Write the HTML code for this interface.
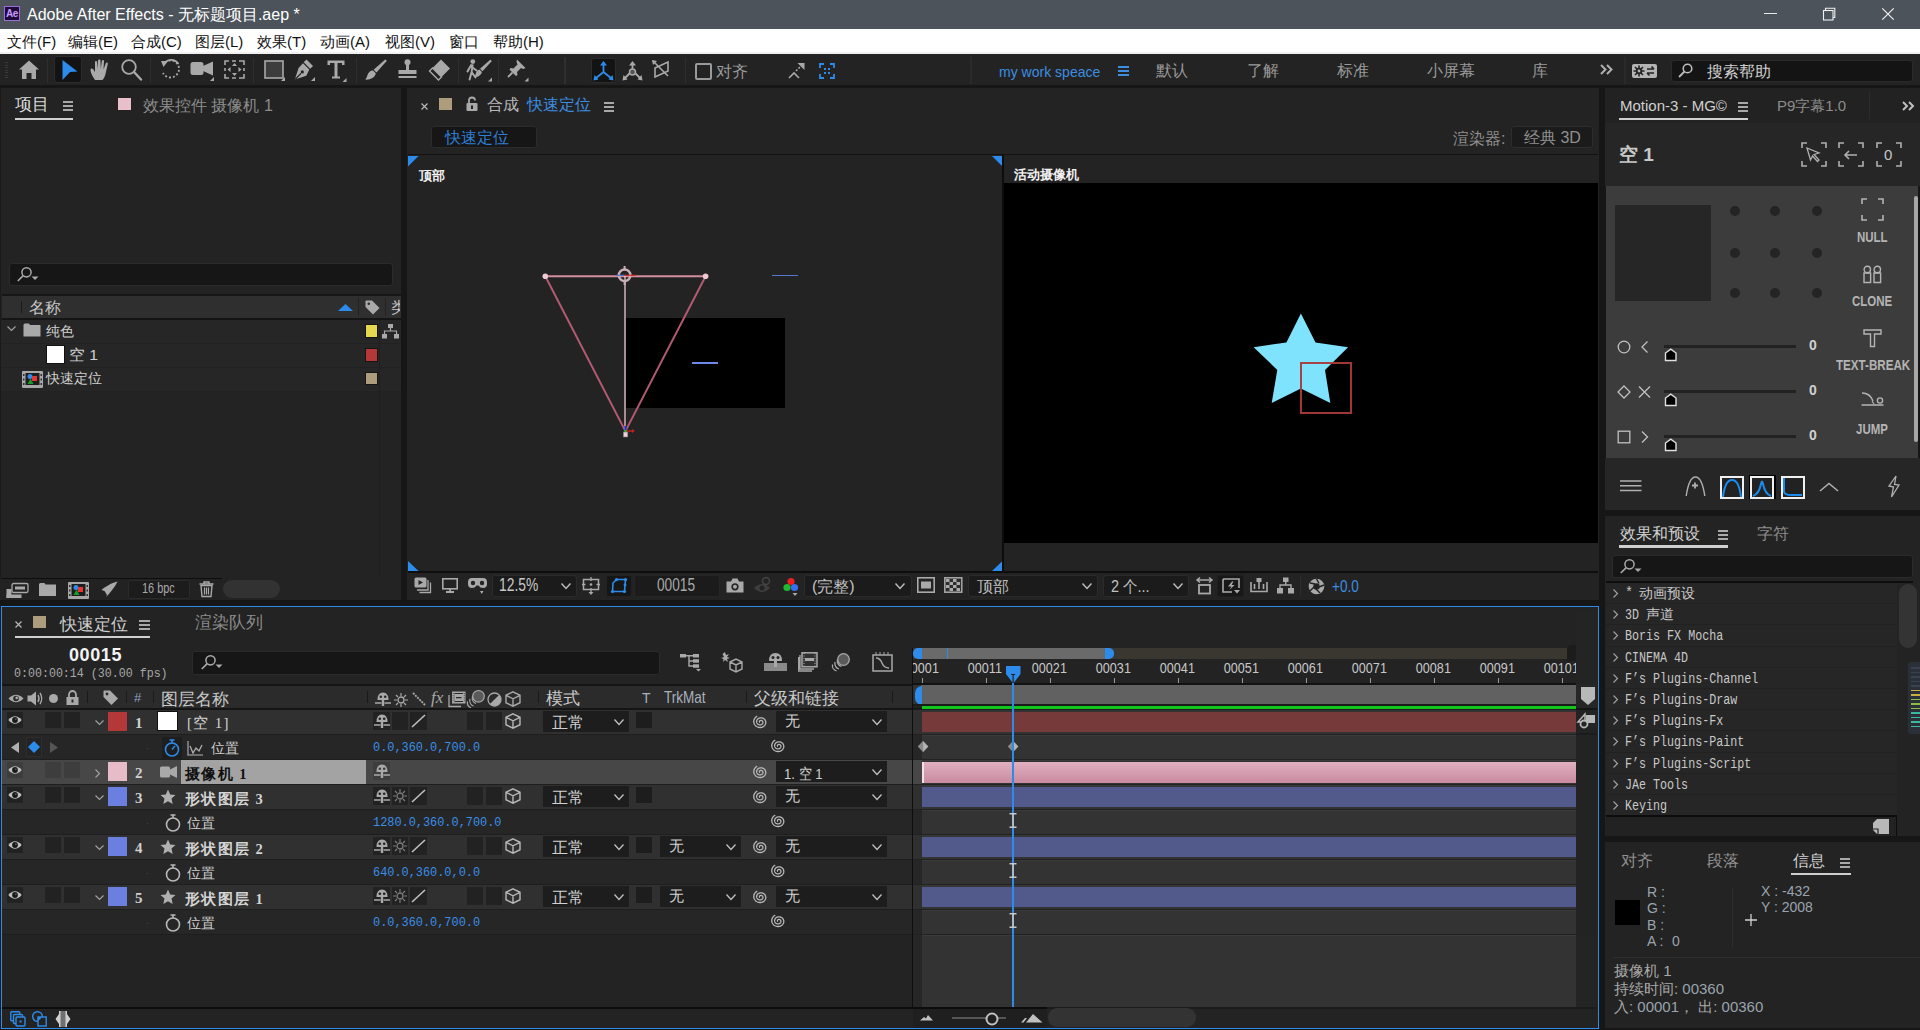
<!DOCTYPE html><html><head><meta charset="utf-8"><style>
html,body{margin:0;padding:0}
body{width:1920px;height:1030px;overflow:hidden;background:#161616;position:relative;font-family:"Liberation Sans",sans-serif}
.a{position:absolute}
.t{position:absolute;white-space:nowrap;line-height:1.2}
svg{overflow:visible}
</style></head><body>
<div class="a" style="left:0px;top:0px;width:1920px;height:29px;background:#4c535a;"></div>
<div class="a" style="left:4px;top:6px;width:16px;height:15px;background:#1f0a3c;border:1px solid #9a70d8;box-sizing:border-box"></div>
<div class="t" style="left:6px;top:8px;font-size:10px;color:#c99cff;font-family:'Liberation Sans',sans-serif;font-weight:bold;letter-spacing:-0.5px">Ae</div>
<div class="t" style="left:27px;top:5px;font-size:16px;color:#ffffff;font-family:'Liberation Sans',sans-serif;">Adobe After Effects - 无标题项目.aep *</div>
<div class="a" style="left:1764px;top:13px;width:13px;height:1px;background:#e8e8e8;"></div>
<svg class="a" style="left:1822px;top:7px;" width="14" height="14" viewBox="0 0 14 14"><rect x="1.5" y="3.5" width="9.5" height="9.5" stroke="#f0f0f0" stroke-width="1.1" fill="none"/><path d="M3.5 3.5 V1.2 H12.8 V10.5 H11" stroke="#f0f0f0" stroke-width="1.1" fill="none"/></svg>
<svg class="a" style="left:1882px;top:8px;" width="12" height="12" viewBox="0 0 12 12"><path d="M0.3 0.3 L11.7 11.7 M11.7 0.3 L0.3 11.7" stroke="#f0f0f0" stroke-width="1.2"/></svg>
<div class="a" style="left:0px;top:29px;width:1920px;height:25px;background:#ffffff;"></div>
<div class="a" style="left:0px;top:52px;width:1920px;height:2px;background:#f0f0f0;"></div>
<div class="t" style="left:7px;top:33px;font-size:15px;color:#111;font-family:'Liberation Sans',sans-serif;">文件(F)</div>
<div class="t" style="left:68px;top:33px;font-size:15px;color:#111;font-family:'Liberation Sans',sans-serif;">编辑(E)</div>
<div class="t" style="left:131px;top:33px;font-size:15px;color:#111;font-family:'Liberation Sans',sans-serif;">合成(C)</div>
<div class="t" style="left:195px;top:33px;font-size:15px;color:#111;font-family:'Liberation Sans',sans-serif;">图层(L)</div>
<div class="t" style="left:257px;top:33px;font-size:15px;color:#111;font-family:'Liberation Sans',sans-serif;">效果(T)</div>
<div class="t" style="left:320px;top:33px;font-size:15px;color:#111;font-family:'Liberation Sans',sans-serif;">动画(A)</div>
<div class="t" style="left:385px;top:33px;font-size:15px;color:#111;font-family:'Liberation Sans',sans-serif;">视图(V)</div>
<div class="t" style="left:449px;top:33px;font-size:15px;color:#111;font-family:'Liberation Sans',sans-serif;">窗口</div>
<div class="t" style="left:493px;top:33px;font-size:15px;color:#111;font-family:'Liberation Sans',sans-serif;">帮助(H)</div>
<div class="a" style="left:0px;top:54px;width:1920px;height:31px;background:#232323;"></div>
<div class="a" style="left:0px;top:85px;width:1920px;height:3px;background:#161616;"></div>
<div class="a" style="left:5px;top:62.0px;width:3px;height:1px;background:#3a3a3a;"></div>
<div class="a" style="left:5px;top:64.5px;width:3px;height:1px;background:#3a3a3a;"></div>
<div class="a" style="left:5px;top:67.0px;width:3px;height:1px;background:#3a3a3a;"></div>
<div class="a" style="left:5px;top:69.5px;width:3px;height:1px;background:#3a3a3a;"></div>
<div class="a" style="left:5px;top:72.0px;width:3px;height:1px;background:#3a3a3a;"></div>
<div class="a" style="left:5px;top:74.5px;width:3px;height:1px;background:#3a3a3a;"></div>
<div class="a" style="left:5px;top:77.0px;width:3px;height:1px;background:#3a3a3a;"></div>
<div class="a" style="left:47px;top:58px;width:1px;height:25px;background:#2e2e2e;"></div>
<div class="a" style="left:150px;top:58px;width:1px;height:25px;background:#2e2e2e;"></div>
<div class="a" style="left:253px;top:58px;width:1px;height:25px;background:#2e2e2e;"></div>
<div class="a" style="left:356px;top:58px;width:1px;height:25px;background:#2e2e2e;"></div>
<div class="a" style="left:458px;top:58px;width:1px;height:25px;background:#2e2e2e;"></div>
<div class="a" style="left:498px;top:58px;width:1px;height:25px;background:#2e2e2e;"></div>
<div class="a" style="left:564px;top:57px;width:2px;height:27px;background:#2f2f2f;"></div>
<div class="a" style="left:685px;top:58px;width:1px;height:25px;background:#2e2e2e;"></div>
<div class="a" style="left:970px;top:57px;width:2px;height:27px;background:#2a2a2a;"></div>
<div class="a" style="left:1624px;top:57px;width:2px;height:27px;background:#2a2a2a;"></div>
<svg class="a" style="left:19px;top:60px;" width="20" height="19" viewBox="0 0 20 19"><path d="M10 0.5 L20 9.5 L17 9.5 L17 19 L12.5 19 L12.5 13 L7.5 13 L7.5 19 L3 19 L3 9.5 L0 9.5 Z" fill="#a9a9a9"/></svg>
<div class="a" style="left:54px;top:56px;width:28px;height:27px;background:#131313;border:1px solid #2c2c2c;border-radius:3px;box-sizing:border-box"></div>
<svg class="a" style="left:62px;top:60px;" width="16" height="20" viewBox="0 0 16 20"><path d="M0.5 0 L15.5 11.5 L8 12 L0.5 20 Z" fill="#2d8ceb"/></svg>
<svg class="a" style="left:90px;top:59px;" width="20" height="22" viewBox="0 0 20 22"><path d="M5 21 C2 17 0.5 13 0.5 11 C0.5 9.5 2 9 3 10 L5 13 L5 3 C5 1.5 7 1.5 7 3 L7.5 10 L8 1.5 C8 0 10.5 0 10.5 1.5 L10.8 10 L11.8 2 C12 0.5 14.2 0.8 14 2.3 L13.5 10.5 L15.7 4.5 C16.2 3 18.2 3.5 17.8 5 L15.5 15 C14.8 18 13.5 20 12.5 21 Z" fill="#a9a9a9"/></svg>
<svg class="a" style="left:121px;top:59px;" width="21" height="22" viewBox="0 0 21 22"><circle cx="8" cy="8" r="6.8" stroke="#a9a9a9" stroke-width="1.8" fill="none"/><path d="M13 13 L20 20.5" stroke="#a9a9a9" stroke-width="2.4" stroke-linecap="round"/></svg>
<svg class="a" style="left:160px;top:59px;" width="22" height="21" viewBox="0 0 22 21"><path d="M5 3.5 A8.5 8.5 0 1 1 3 14" stroke="#a9a9a9" stroke-width="1.8" fill="none" stroke-dasharray="2 2"/><path d="M5 3.5 A8.5 8.5 0 0 1 18.5 5" stroke="#a9a9a9" stroke-width="1.8" fill="none"/><path d="M1 2 L8 2 L3.5 8 Z" fill="#a9a9a9"/></svg>
<svg class="a" style="left:190px;top:60px;" width="25" height="22" viewBox="0 0 25 22"><rect x="0.5" y="2" width="13" height="13" rx="2.5" fill="#a9a9a9"/><path d="M13 6 L23 1.5 L23 15.5 L13 11 Z" fill="#a9a9a9"/><path d="M20 21 L24 21 L24 17 Z" fill="#a9a9a9"/></svg>
<svg class="a" style="left:224px;top:60px;" width="21" height="19" viewBox="0 0 21 19"><path d="M1 5 V1 H5 M8 1 H12 M15 1 H20 V5 M20 8 V11 M20 14 V18 H15 M12 18 H8 M5 18 H1 V14 M1 11 V8" stroke="#a9a9a9" stroke-width="1.6" fill="none"/><path d="M10.5 3 L13 6 H8 Z M10.5 16 L13 13 H8 Z M3.5 9.5 L6.5 7 V12 Z M17.5 9.5 L14.5 7 V12 Z" fill="#a9a9a9"/></svg>
<svg class="a" style="left:264px;top:60px;" width="22" height="22" viewBox="0 0 22 22"><rect x="1" y="1" width="18" height="17" fill="#3d3d3d" stroke="#a9a9a9" stroke-width="1.6"/><path d="M21 17 V21 H17 Z" fill="#a9a9a9"/></svg>
<svg class="a" style="left:294px;top:59px;" width="22" height="23" viewBox="0 0 22 23"><path d="M12.5 0.5 L19 7 L16.2 9.8 L9.7 3.3 Z" fill="#a9a9a9"/><path d="M9 4.2 L15.3 10.5 L12.3 16.8 L0.8 20.6 L4.6 9.1 Z" fill="#a9a9a9"/><path d="M1.2 20.2 L7 14.4" stroke="#232323" stroke-width="1.3"/><circle cx="8.3" cy="12.9" r="1.6" fill="#232323"/><path d="M21 18 V22 H17 Z" fill="#a9a9a9"/></svg>
<svg class="a" style="left:327px;top:60px;" width="20" height="22" viewBox="0 0 20 22"><path d="M0.5 0.5 H17.5 V5 H15 V3 H10.5 V16.5 H13 V18.5 H5 V16.5 H7.5 V3 H3 V5 H0.5 Z" fill="#a9a9a9"/><path d="M19.5 18 V22 H15.5 Z" fill="#a9a9a9"/></svg>
<svg class="a" style="left:365px;top:59px;" width="22" height="22" viewBox="0 0 22 22"><path d="M20.2 0.6 Q21.8 0.8 21.4 2.2 L11.5 13.6 L8.6 10.8 Z" fill="#a9a9a9"/><path d="M8 11.5 L10.8 14.3 C10 18.5 5.5 21 0.3 20.6 C2.5 18.6 2 15 4.3 13 C5.6 11.9 6.8 11.5 8 11.5 Z" fill="#a9a9a9"/></svg>
<svg class="a" style="left:397px;top:59px;" width="21" height="22" viewBox="0 0 21 22"><circle cx="10.5" cy="3.3" r="3" fill="#a9a9a9"/><path d="M9 6 H12 V11 H19.5 V15 H1.5 V11 H9 Z" fill="#a9a9a9"/><rect x="1.5" y="17" width="18" height="2" fill="#a9a9a9"/></svg>
<svg class="a" style="left:429px;top:59px;" width="22" height="22" viewBox="0 0 22 22"><path d="M12 0.5 L21 9.5 L12.5 18 L3.5 9 Z" fill="#a9a9a9"/><path d="M3.5 9 L12.5 18 L9.5 21 L0.5 12 Z" stroke="#a9a9a9" stroke-width="1.4" fill="none"/></svg>
<svg class="a" style="left:466px;top:59px;" width="27" height="23" viewBox="0 0 27 23"><circle cx="6.8" cy="2.6" r="2.4" fill="#a9a9a9"/><path d="M5.2 6 L1.5 12.5 M6.6 6.2 L5.6 13 L3.6 20.5 M5.6 13 L9.5 18.5 M5.8 8 L10.5 11.5" stroke="#a9a9a9" stroke-width="2" fill="none" stroke-linecap="round"/><path d="M24.2 0.8 Q25.8 1 25.4 2.4 L16.5 12.3 L14 9.8 Z" fill="#a9a9a9"/><path d="M13.4 10.4 L15.9 12.9 C15 16.5 11.5 18.3 8 18 C10 16.3 9.5 13.5 11.5 11.6 Z" fill="#a9a9a9"/><path d="M26 18.5 V22.5 H22 Z" fill="#a9a9a9"/></svg>
<svg class="a" style="left:507px;top:59px;" width="22" height="23" viewBox="0 0 22 23"><path d="M10 0.5 L18.5 9 L16.5 10 L14 9 L10 13 L10.5 16 L9 17 L2.5 10.5 L3.5 9 L6.5 9.5 L10.5 5.5 L9.5 3 Z" fill="#a9a9a9"/><path d="M5.5 13.5 L1 18" stroke="#a9a9a9" stroke-width="1.8"/><path d="M21.5 18.5 V22.5 H17.5 Z" fill="#a9a9a9"/></svg>
<div class="a" style="left:591px;top:58px;width:25px;height:25px;background:#131313;border:1px solid #2c2c2c;border-radius:3px;box-sizing:border-box"></div>
<svg class="a" style="left:593px;top:61px;" width="21" height="20" viewBox="0 0 21 20"><path d="M10.5 3 V11 L2.5 17.5 M10.5 11 L18.5 17.5" stroke="#2d8ceb" stroke-width="1.8" fill="none"/><path d="M10.5 0 L14 4.5 H7 Z M0.5 19.5 L1.5 14 L5.5 18.5 Z M20.5 19.5 L19.5 14 L15.5 18.5 Z" fill="#2d8ceb"/></svg>
<svg class="a" style="left:622px;top:61px;" width="21" height="20" viewBox="0 0 21 20"><path d="M10.5 3 V9 M8 12 L2.5 17.5 M13 12 L18.5 17.5" stroke="#a9a9a9" stroke-width="1.8" fill="none"/><circle cx="10.5" cy="11" r="3" stroke="#a9a9a9" stroke-width="1.5" fill="#555"/><path d="M10.5 0 L14 4.5 H7 Z M0.5 19.5 L1.5 14 L5.5 18.5 Z M20.5 19.5 L19.5 14 L15.5 18.5 Z" fill="#a9a9a9"/></svg>
<svg class="a" style="left:652px;top:60px;" width="18" height="18" viewBox="0 0 18 18"><path d="M1 1 L16 16 M3 17 V8 L16 2 V11 Z" stroke="#a9a9a9" stroke-width="1.6" fill="none"/><path d="M0 0 L5 1 L1 5 Z" fill="#a9a9a9"/></svg>
<div class="a" style="left:695px;top:63px;width:17px;height:17px;border:2px solid #9a9a9a;border-radius:2px;box-sizing:border-box"></div>
<div class="t" style="left:716px;top:62px;font-size:16px;color:#9a9a9a;font-family:'Liberation Sans',sans-serif;">对齐</div>
<svg class="a" style="left:788px;top:63px;" width="17" height="16" viewBox="0 0 17 16"><path d="M1 15 L6 10 L11 15" stroke="#a9a9a9" stroke-width="1.6" fill="none"/><path d="M8 8 L14 2" stroke="#a9a9a9" stroke-width="1.5" stroke-dasharray="2 1.5"/><path d="M16.5 0 V7 L9.5 0 Z" fill="#a9a9a9"/></svg>
<svg class="a" style="left:819px;top:63px;" width="16" height="16" viewBox="0 0 16 16"><path d="M1 5 V1 H5 M11 1 H15 V5 M15 11 V15 H11 M5 15 H1 V11" stroke="#2d8ceb" stroke-width="1.8" fill="none"/><rect x="5" y="5" width="2" height="2" fill="#2d8ceb"/><rect x="9" y="5" width="2" height="2" fill="#2d8ceb"/><rect x="5" y="9" width="2" height="2" fill="#2d8ceb"/><rect x="9" y="9" width="2" height="2" fill="#2d8ceb"/></svg>
<div class="t" style="left:999px;top:62.5px;font-size:15px;color:#3d8ee0;font-family:'Liberation Sans',sans-serif;transform:scaleX(0.935);transform-origin:0 0;">my work speace</div>
<svg class="a" style="left:1118px;top:66px;" width="11" height="10" viewBox="0 0 11 10"><rect x="0" y="0" width="11" height="2" fill="#3d8ee0"/><rect x="0" y="4" width="11" height="2" fill="#3d8ee0"/><rect x="0" y="8" width="11" height="2" fill="#3d8ee0"/></svg>
<div class="t" style="left:1156px;top:61px;font-size:16px;color:#9a9a9a;font-family:'Liberation Sans',sans-serif;">默认</div>
<div class="t" style="left:1247px;top:61px;font-size:16px;color:#9a9a9a;font-family:'Liberation Sans',sans-serif;">了解</div>
<div class="t" style="left:1337px;top:61px;font-size:16px;color:#9a9a9a;font-family:'Liberation Sans',sans-serif;">标准</div>
<div class="t" style="left:1427px;top:61px;font-size:16px;color:#9a9a9a;font-family:'Liberation Sans',sans-serif;">小屏幕</div>
<div class="t" style="left:1532px;top:61px;font-size:16px;color:#9a9a9a;font-family:'Liberation Sans',sans-serif;">库</div>
<svg class="a" style="left:1600px;top:64px;" width="13" height="11" viewBox="0 0 13 11"><path d="M1 1 L5.5 5.5 L1 10 M7 1 L11.5 5.5 L7 10" stroke="#b0b0b0" stroke-width="2" fill="none"/></svg>
<svg class="a" style="left:1632px;top:64px;" width="25" height="15" viewBox="0 0 25 15"><rect x="0" y="0" width="25" height="14" rx="2" fill="#b4b4b4"/><circle cx="7" cy="7" r="3.2" fill="#232323"/><path d="M7 1.5 V12.5 M1.5 7 H12.5 M3 3 L11 11 M11 3 L3 11" stroke="#232323" stroke-width="1.6"/><circle cx="7" cy="7" r="1.4" fill="#b4b4b4"/><path d="M15 5 H22 M19.5 2.5 L22 5 M22 9 H15 M17.5 11.5 L15 9" stroke="#232323" stroke-width="1.6" fill="none"/></svg>
<div class="a" style="left:1671px;top:60px;width:242px;height:22px;background:#141414;border:1px solid #2a2a2a;border-radius:3px;box-sizing:border-box"></div>
<svg class="a" style="left:1678px;top:63px;" width="15" height="15" viewBox="0 0 15 15"><circle cx="9.5" cy="5.5" r="4.3" stroke="#bbb" stroke-width="1.6" fill="none"/><path d="M6.5 8.5 L1 14" stroke="#bbb" stroke-width="1.8"/></svg>
<div class="t" style="left:1707px;top:62px;font-size:16px;color:#cfcfcf;font-family:'Liberation Sans',sans-serif;">搜索帮助</div>
<div class="a" style="left:0px;top:88px;width:401px;height:512px;background:#232323;"></div>
<div class="t" style="left:15px;top:95px;font-size:17px;color:#d8d8d8;font-family:'Liberation Sans',sans-serif;">项目</div>
<svg class="a" style="left:63px;top:101px;" width="10" height="10" viewBox="0 0 10 10"><rect x="0" y="0" width="10" height="2" fill="#a8a8a8"/><rect x="0" y="4" width="10" height="2" fill="#a8a8a8"/><rect x="0" y="8" width="10" height="2" fill="#a8a8a8"/></svg>
<div class="a" style="left:15px;top:118px;width:58px;height:2px;background:#cfcfcf;"></div>
<div class="a" style="left:118px;top:98px;width:13px;height:12px;background:#e8bfcb;"></div>
<div class="t" style="left:143px;top:96px;font-size:16px;color:#8c8c8c;font-family:'Liberation Sans',sans-serif;">效果控件 摄像机 1</div>
<div class="a" style="left:9px;top:263px;width:384px;height:23px;background:#161616;border:1px solid #2b2b2b;border-radius:3px;box-sizing:border-box"></div>
<svg class="a" style="left:17px;top:267px;" width="22" height="15" viewBox="0 0 22 15"><circle cx="9.5" cy="5.3" r="4.6" stroke="#aaaaaa" stroke-width="1.5" fill="none"/><path d="M6.2 8.6 L0.8 14" stroke="#aaaaaa" stroke-width="1.6"/><path d="M14.5 9.5 L21.5 9.5 L18 13 Z" fill="#aaaaaa"/></svg>
<div class="a" style="left:2px;top:294px;width:399px;height:2px;background:#161616;"></div>
<div class="a" style="left:2px;top:296px;width:399px;height:22px;background:#2f2f2f;"></div>
<div class="a" style="left:2px;top:318px;width:399px;height:2px;background:#151515;"></div>
<div class="a" style="left:21px;top:301px;width:1px;height:12px;background:#1b1b1b;"></div>
<div class="t" style="left:29px;top:298px;font-size:16px;color:#c8c8c8;font-family:'Liberation Sans',sans-serif;">名称</div>
<svg class="a" style="left:338px;top:304px;" width="15" height="7" viewBox="0 0 15 7"><path d="M0 7 L7.5 0 L15 7 Z" fill="#2d8ceb"/></svg>
<div class="a" style="left:358px;top:298px;width:1px;height:18px;background:#222;"></div>
<svg class="a" style="left:365px;top:300px;" width="15" height="15" viewBox="0 0 15 15"><path d="M0.5 1.5 Q0.5 0.5 1.5 0.5 L7 0.5 L14.5 8 L8 14.5 L0.5 7 Z" fill="#a9a9a9"/><circle cx="3.8" cy="3.8" r="1.3" fill="#2f2f2f"/></svg>
<div class="a" style="left:385px;top:298px;width:1px;height:18px;background:#222;"></div>
<div class="a" style="left:391px;top:296px;width:9px;height:22px;overflow:hidden"><div class="t" style="left:0;top:2px;font-size:16px;color:#c8c8c8">类</div></div>
<div class="a" style="left:0px;top:88px;width:1px;height:512px;background:#1a1a1a;"></div>
<div class="a" style="left:1px;top:320px;width:400px;height:23px;background:#262626;"></div>
<div class="a" style="left:1px;top:343px;width:400px;height:1px;background:#222222;"></div>
<div class="a" style="left:1px;top:344px;width:400px;height:23px;background:#262626;"></div>
<div class="a" style="left:1px;top:367px;width:400px;height:1px;background:#222222;"></div>
<div class="a" style="left:1px;top:368px;width:400px;height:23px;background:#262626;"></div>
<div class="a" style="left:1px;top:391px;width:400px;height:1px;background:#222222;"></div>
<div class="a" style="left:379px;top:320px;width:1px;height:258px;background:#1f1f1f;"></div>
<svg class="a" style="left:7px;top:326px;" width="9" height="5" viewBox="0 0 9 5"><path d="M0.5 0.5 L4.5 4.5 L8.5 0.5" stroke="#a0a0a0" stroke-width="1.2" fill="none"/></svg>
<svg class="a" style="left:23px;top:323px;" width="18" height="14" viewBox="0 0 18 14"><path d="M0.5 2 Q0.5 0.5 2 0.5 L6 0.5 L7 2 L17 2 Q17.5 2 17.5 3 L17.5 13.5 L0.5 13.5 Z" fill="#a9a9a9"/></svg>
<div class="t" style="left:46px;top:323px;font-size:14px;color:#cfcfcf;font-family:'Liberation Sans',sans-serif;">纯色</div>
<div class="a" style="left:366px;top:325px;width:11px;height:12px;background:#e5d84f;outline:1px solid #151515"></div>
<svg class="a" style="left:382px;top:324px;" width="17" height="15" viewBox="0 0 17 15"><rect x="6" y="0" width="5" height="4" fill="#a9a9a9"/><rect x="0" y="10" width="5" height="4.5" fill="#a9a9a9"/><rect x="12" y="10" width="5" height="4.5" fill="#a9a9a9"/><path d="M8.5 4 V7 M2.5 10 V7 H14.5 V10" stroke="#a9a9a9" stroke-width="1.2" fill="none"/></svg>
<div class="a" style="left:46px;top:345px;width:19px;height:19px;background:#ffffff;border:1px solid #111;box-sizing:border-box"></div>
<div class="t" style="left:69px;top:346px;font-size:15px;color:#cfcfcf;font-family:'Liberation Sans',sans-serif;transform:scaleX(1.05);transform-origin:0 0;">空 1</div>
<div class="a" style="left:366px;top:349px;width:11px;height:12px;background:#b53838;outline:1px solid #151515"></div>
<svg class="a" style="left:22px;top:371px;" width="21" height="17" viewBox="0 0 21 17"><rect x="0" y="0" width="21" height="17" rx="1" fill="#a8a8a8"/><rect x="3.5" y="2" width="14" height="12" fill="#1e1e1e"/><rect x="1" y="3" width="1.5" height="2" fill="#333"/><rect x="1" y="7.5" width="1.5" height="2" fill="#333"/><rect x="1" y="12" width="1.5" height="2" fill="#333"/><rect x="18.5" y="3" width="1.5" height="2" fill="#333"/><rect x="18.5" y="7.5" width="1.5" height="2" fill="#333"/><rect x="18.5" y="12" width="1.5" height="2" fill="#333"/><circle cx="8" cy="5.5" r="2.5" fill="#2d8ceb"/><rect x="10" y="5" width="5" height="5" fill="#e53535"/><path d="M5.5 13 L8.5 7.5 L11.5 13 Z" fill="#1a9a2a"/></svg>
<div class="t" style="left:46px;top:370px;font-size:14px;color:#cfcfcf;font-family:'Liberation Sans',sans-serif;">快速定位</div>
<div class="a" style="left:366px;top:373px;width:11px;height:11px;background:#ae9d7c;outline:1px solid #151515"></div>
<div class="a" style="left:2px;top:578px;width:220px;height:1px;background:#0e0e0e;"></div>
<div class="a" style="left:0px;top:579px;width:401px;height:21px;background:#222222;"></div>
<div class="a" style="left:222px;top:579px;width:179px;height:21px;background:#232323;"></div>
<svg class="a" style="left:6px;top:583px;" width="23" height="15" viewBox="0 0 23 15"><rect x="6" y="0.5" width="16" height="9" rx="1.5" fill="none" stroke="#a9a9a9" stroke-width="1.3"/><rect x="9" y="3.5" width="10" height="3" fill="#a9a9a9"/><rect x="0.5" y="6" width="5" height="9" fill="#a9a9a9"/><rect x="0.5" y="11.5" width="15" height="3.5" fill="#a9a9a9"/></svg>
<svg class="a" style="left:39px;top:583px;" width="17" height="13" viewBox="0 0 17 13"><path d="M0 1.5 Q0 0 1.5 0 L5.5 0 L6.5 1.5 L17 1.5 L17 13 L0 13 Z" fill="#a9a9a9"/></svg>
<svg class="a" style="left:68px;top:582px;" width="21" height="17" viewBox="0 0 21 17"><rect x="0" y="0" width="21" height="17" rx="1" fill="#a8a8a8"/><rect x="3.5" y="2" width="14" height="12" fill="#1e1e1e"/><rect x="1" y="3" width="1.5" height="2" fill="#333"/><rect x="1" y="7.5" width="1.5" height="2" fill="#333"/><rect x="1" y="12" width="1.5" height="2" fill="#333"/><rect x="18.5" y="3" width="1.5" height="2" fill="#333"/><rect x="18.5" y="7.5" width="1.5" height="2" fill="#333"/><rect x="18.5" y="12" width="1.5" height="2" fill="#333"/><circle cx="8" cy="5.5" r="2.5" fill="#2d8ceb"/><rect x="10" y="5" width="5" height="5" fill="#e53535"/><path d="M5.5 13 L8.5 7.5 L11.5 13 Z" fill="#1a9a2a"/></svg>
<svg class="a" style="left:101px;top:581px;" width="17" height="16" viewBox="0 0 17 16"><path d="M16.5 0.5 C10 2 4 6 0.5 9 L3.5 10 L6 14 L5 16 C9 12 14 6 16.5 0.5 Z" fill="#a9a9a9"/></svg>
<div class="a" style="left:128px;top:580px;width:62px;height:19px;background:#1c1c1c;border:1px solid #2a2a2a;border-radius:2px;box-sizing:border-box"></div>
<div class="t" style="left:142px;top:580px;font-size:14px;color:#a8a8a8;font-family:'Liberation Sans',sans-serif;transform:scaleX(0.78);transform-origin:0 0;">16 bpc</div>
<svg class="a" style="left:199px;top:581px;" width="15" height="16" viewBox="0 0 15 16"><path d="M0.5 3 H14.5 M5 3 V1 H10 V3" stroke="#a9a9a9" stroke-width="1.4" fill="none"/><path d="M2 4.5 H13 L12 15.5 H3 Z" stroke="#a9a9a9" stroke-width="1.4" fill="none"/><path d="M5.5 6.5 V13.5 M7.5 6.5 V13.5 M9.5 6.5 V13.5" stroke="#a9a9a9" stroke-width="1.2"/></svg>
<div class="a" style="left:223px;top:580px;width:57px;height:18px;background:#323232;border-radius:9px"></div>
<div class="a" style="left:407px;top:88px;width:1192px;height:512px;background:#232323;"></div>
<svg class="a" style="left:421px;top:103px;" width="7" height="7" viewBox="0 0 7 7"><path d="M0.5 0.5 L6.5 6.5 M6.5 0.5 L0.5 6.5" stroke="#b8b8b8" stroke-width="1.2"/></svg>
<div class="a" style="left:439px;top:98px;width:13px;height:12px;background:#ae9d7c;"></div>
<svg class="a" style="left:466px;top:97px;" width="12" height="14" viewBox="0 0 12 14"><path d="M3 6 V3.5 A3 3 0 0 1 9 3.5" stroke="#a9a9a9" stroke-width="1.8" fill="none"/><rect x="0.5" y="6" width="11" height="8" rx="1" fill="#a9a9a9"/><rect x="5" y="8.5" width="2" height="3.5" fill="#232323"/></svg>
<div class="t" style="left:487px;top:95px;font-size:16px;color:#b8b8b8;font-family:'Liberation Sans',sans-serif;">合成</div>
<div class="t" style="left:527px;top:95px;font-size:16px;color:#3d8ee0;font-family:'Liberation Sans',sans-serif;">快速定位</div>
<svg class="a" style="left:604px;top:102px;" width="10" height="10" viewBox="0 0 10 10"><rect x="0" y="0" width="10" height="2" fill="#a8a8a8"/><rect x="0" y="4" width="10" height="2" fill="#a8a8a8"/><rect x="0" y="8" width="10" height="2" fill="#a8a8a8"/></svg>
<div class="a" style="left:431px;top:126px;width:106px;height:22px;background:#161616;border:1px solid #2b2b2b;border-radius:3px;box-sizing:border-box"></div>
<div class="t" style="left:445px;top:128px;font-size:16px;color:#2f7fd6;font-family:'Liberation Sans',sans-serif;">快速定位</div>
<div class="t" style="left:1453px;top:129px;font-size:16px;color:#8f8f8f;font-family:'Liberation Sans',sans-serif;">渲染器:</div>
<div class="a" style="left:1511px;top:126px;width:82px;height:22px;background:#1b1b1b;border:1px solid #2d2d2d;border-radius:3px;box-sizing:border-box"></div>
<div class="t" style="left:1524px;top:128px;font-size:16px;color:#8f8f8f;font-family:'Liberation Sans',sans-serif;">经典 3D</div>
<div class="a" style="left:408px;top:154px;width:1190px;height:1px;background:#121212;"></div>
<svg class="a" style="left:408px;top:156px;" width="11" height="11" viewBox="0 0 11 11"><path d="M0 0 H10.5 L0 10.5 Z" fill="#2d8ceb"/></svg>
<svg class="a" style="left:992px;top:156px;" width="11" height="11" viewBox="0 0 11 11"><path d="M0 0 H10.5 V10.5 Z" fill="#2d8ceb"/></svg>
<svg class="a" style="left:408px;top:561px;" width="11" height="10" viewBox="0 0 11 10"><path d="M0 0 L10.5 10 H0 Z" fill="#2d8ceb"/></svg>
<svg class="a" style="left:992px;top:561px;" width="11" height="10" viewBox="0 0 11 10"><path d="M10.5 0 V10 H0 Z" fill="#2d8ceb"/></svg>
<div class="t" style="left:419px;top:168px;font-size:13px;color:#f0f0f0;font-family:'Liberation Serif',serif;font-weight:bold;">顶部</div>
<div class="a" style="left:1002px;top:155px;width:2px;height:416px;background:#0d0d0d;"></div>
<div class="a" style="left:1004px;top:183px;width:594px;height:360px;background:#000000;"></div>
<div class="t" style="left:1014px;top:167px;font-size:13px;color:#f0f0f0;font-family:'Liberation Serif',serif;font-weight:bold;">活动摄像机</div>
<div class="a" style="left:626px;top:318px;width:159px;height:90px;background:#000000;"></div>
<div class="a" style="left:692px;top:362px;width:26px;height:2px;background:#6d8ae8;"></div>
<div class="a" style="left:772px;top:275px;width:26px;height:1px;background:#5577d0;"></div>
<svg class="a" style="left:540px;top:262px;" width="175" height="180" viewBox="0 0 175 180"><path d="M5.3 14.2 L85.4 169.1 L165.6 14.2" stroke="#b25a72" stroke-width="2" fill="none"/><path d="M5.3 14.2 L165.6 14.2" stroke="#d38ea0" stroke-width="2" fill="none"/><path d="M85 14 L85 169" stroke="#efc8d2" stroke-width="1.3"/><circle cx="5.3" cy="14.2" r="2.8" fill="#f0c8d2"/><circle cx="165.6" cy="14.2" r="2.8" fill="#f0c8d2"/><circle cx="84.6" cy="13.3" r="5.8" stroke="#c9b0b6" stroke-width="2.4" fill="none"/><path d="M84.6 4 V8 M84.6 19 V23" stroke="#c9b0b6" stroke-width="2"/><path d="M76 13.3 H84.6" stroke="#4a70d0" stroke-width="1.2"/><path d="M84.6 13.3 H96" stroke="#d02a2a" stroke-width="1.2"/><path d="M85.4 164 V170" stroke="#1a2ad0" stroke-width="2"/><path d="M85.4 169 H92" stroke="#c81e1e" stroke-width="1.5"/><path d="M92 167 L95 169 L92 171 Z" fill="#c81e1e"/><circle cx="85.4" cy="169" r="1.3" fill="#19c119"/><rect x="83.3" y="170" width="4.5" height="5" fill="#f0cfd8" stroke="#777" stroke-width="0.6"/></svg>
<svg class="a" style="left:1240px;top:300px;" width="130" height="120" viewBox="0 0 130 120"><path d="M60.9 13.4 L75.5 42.5 L108.1 47.2 L85 69.9 L90.3 103.1 L60.9 88.5 L31.7 103.1 L37.3 69.9 L13.7 47.2 L46.4 42.5 Z" fill="#7fe3fe"/><rect x="61" y="63" width="50" height="50" stroke="#a83a3a" stroke-width="2" fill="none" opacity="0.95"/></svg>
<div class="a" style="left:408px;top:571px;width:1190px;height:2px;background:#0e0e0e;"></div>
<div class="a" style="left:407px;top:573px;width:1192px;height:27px;background:#232323;"></div>
<svg class="a" style="left:414px;top:577px;" width="18" height="17" viewBox="0 0 18 17"><rect x="0.5" y="0.5" width="12" height="10" rx="1.5" fill="#a9a9a9"/><path d="M4.5 3 L9 5.5 L4.5 8 Z" fill="#232323"/><path d="M14 3 V13 H3 M16.5 5.5 V15.5 H5.5" stroke="#a9a9a9" stroke-width="1.3" fill="none"/></svg>
<svg class="a" style="left:442px;top:578px;" width="16" height="15" viewBox="0 0 16 15"><rect x="0.8" y="0.8" width="14.4" height="10" stroke="#a9a9a9" stroke-width="1.6" fill="none"/><path d="M8 11 V13 M4 14 H12" stroke="#a9a9a9" stroke-width="1.8"/></svg>
<svg class="a" style="left:467px;top:577px;" width="21" height="18" viewBox="0 0 21 18"><path d="M1 5 Q1 1 5 1 L16 1 Q20 1 20 5 L20 7 Q20 11 16 11 Q13 11 11.5 8.5 L9.5 8.5 Q8 11 5 11 Q1 11 1 7 Z" fill="#a9a9a9"/><circle cx="6" cy="6" r="2.2" fill="#232323"/><circle cx="15" cy="6" r="2.2" fill="#232323"/><path d="M11 13 L14.5 13 L12.75 16 Z" fill="#a9a9a9" transform="translate(2,1)"/></svg>
<div class="a" style="left:492px;top:575px;width:85px;height:22px;background:#1b1b1b;border:1px solid #2b2b2b;border-radius:3px;box-sizing:border-box"></div>
<div class="t" style="left:499px;top:575px;font-size:18px;color:#c8c8c8;font-family:'Liberation Sans',sans-serif;transform:scaleX(0.77);transform-origin:0 0;">12.5%</div>
<svg class="a" style="left:561px;top:583px;" width="10" height="6" viewBox="0 0 10 6"><path d="M0.5 0.5 L5.0 5.5 L9.5 0.5" stroke="#bbb" stroke-width="1.5" fill="none"/></svg>
<svg class="a" style="left:582px;top:577px;" width="20" height="19" viewBox="0 0 20 19"><rect x="1.5" y="2.5" width="15" height="10" stroke="#a9a9a9" stroke-width="1.5" fill="none"/><path d="M9 0 V4 M9 11 V15 M0 7.5 H3.5 M14.5 7.5 H18" stroke="#a9a9a9" stroke-width="1.3"/><circle cx="9" cy="7.5" r="1.3" fill="#a9a9a9"/><path d="M6.5 15 H11.5 L9 18 Z" fill="#a9a9a9"/></svg>
<div class="a" style="left:606px;top:575px;width:26px;height:22px;background:#161616;border:1px solid #222;border-radius:3px;box-sizing:border-box"></div>
<svg class="a" style="left:610px;top:578px;" width="18" height="16" viewBox="0 0 18 16"><path d="M2.5 13.5 L3 5 L6.5 1.5 L15.5 1.5 L14.5 13.5 Z" stroke="#2d8ceb" stroke-width="1.6" fill="none"/><circle cx="2.5" cy="13.5" r="1.6" fill="#2d8ceb"/><circle cx="14.5" cy="13.5" r="1.6" fill="#2d8ceb"/><circle cx="6.5" cy="1.6" r="1.6" fill="#2d8ceb"/><circle cx="15.5" cy="1.6" r="1.6" fill="#2d8ceb"/><circle cx="15" cy="7" r="1.4" fill="#2d8ceb"/></svg>
<div class="a" style="left:634px;top:575px;width:86px;height:22px;background:#1b1b1b;border:1px solid #262626;border-radius:3px;box-sizing:border-box"></div>
<div class="t" style="left:657px;top:575px;font-size:18px;color:#a8a8a8;font-family:'Liberation Sans',sans-serif;transform:scaleX(0.76);transform-origin:0 0;">00015</div>
<svg class="a" style="left:726px;top:578px;" width="18" height="15" viewBox="0 0 18 15"><path d="M0.5 3.5 H5 L6.5 0.5 H11.5 L13 3.5 H17.5 V14.5 H0.5 Z" fill="#a9a9a9"/><circle cx="9" cy="8.8" r="3.6" fill="#232323"/><circle cx="9" cy="8.8" r="2" fill="#a9a9a9"/></svg>
<svg class="a" style="left:753px;top:577px;" width="19" height="17" viewBox="0 0 19 17"><path d="M1 11 Q9 3 17 11 Q9 19 1 11 Z" fill="#3e3e3e"/><circle cx="9" cy="11" r="2.5" fill="#232323"/><circle cx="13" cy="4" r="3.5" stroke="#444" stroke-width="1.5" fill="none"/></svg>
<svg class="a" style="left:783px;top:577px;" width="16" height="20" viewBox="0 0 16 20"><circle cx="8" cy="4.5" r="3.6" fill="#ea2020"/><circle cx="4" cy="10.5" r="3.6" fill="#20b830"/><circle cx="11.5" cy="10.5" r="3.6" fill="#3a6ef0"/><path d="M9.5 16 H14.5 L12 19 Z" fill="#aaa"/></svg>
<div class="a" style="left:804px;top:575px;width:108px;height:22px;background:#1b1b1b;border:1px solid #2b2b2b;border-radius:3px;box-sizing:border-box"></div>
<div class="t" style="left:812px;top:577px;font-size:16px;color:#c0c0c0;font-family:'Liberation Sans',sans-serif;">(完整)</div>
<svg class="a" style="left:895px;top:583px;" width="10" height="6" viewBox="0 0 10 6"><path d="M0.5 0.5 L5.0 5.5 L9.5 0.5" stroke="#bbb" stroke-width="1.5" fill="none"/></svg>
<svg class="a" style="left:917px;top:577px;" width="18" height="16" viewBox="0 0 18 16"><rect x="0.8" y="0.8" width="16.4" height="14.4" stroke="#a9a9a9" stroke-width="1.6" fill="none"/><rect x="4" y="4.5" width="10" height="7" fill="#a9a9a9"/></svg>
<svg class="a" style="left:944px;top:577px;" width="19" height="16" viewBox="0 0 19 16"><rect x="0.8" y="0.8" width="17" height="14.4" stroke="#a9a9a9" stroke-width="1.5" fill="#2c2c2c"/><rect x="2" y="2" width="3.5" height="3" fill="#a9a9a9"/><rect x="9" y="2" width="3.5" height="3" fill="#a9a9a9"/><rect x="5.5" y="5" width="3.5" height="3" fill="#a9a9a9"/><rect x="12.5" y="5" width="3.5" height="3" fill="#a9a9a9"/><rect x="2" y="8" width="3.5" height="3" fill="#a9a9a9"/><rect x="9" y="8" width="3.5" height="3" fill="#a9a9a9"/><rect x="5.5" y="11" width="3.5" height="3" fill="#a9a9a9"/><rect x="12.5" y="11" width="3.5" height="3" fill="#a9a9a9"/></svg>
<div class="a" style="left:968px;top:575px;width:130px;height:22px;background:#1b1b1b;border:1px solid #2b2b2b;border-radius:3px;box-sizing:border-box"></div>
<div class="t" style="left:977px;top:577px;font-size:16px;color:#c0c0c0;font-family:'Liberation Sans',sans-serif;">顶部</div>
<svg class="a" style="left:1082px;top:583px;" width="10" height="6" viewBox="0 0 10 6"><path d="M0.5 0.5 L5.0 5.5 L9.5 0.5" stroke="#bbb" stroke-width="1.5" fill="none"/></svg>
<div class="a" style="left:1103px;top:575px;width:86px;height:22px;background:#1b1b1b;border:1px solid #2b2b2b;border-radius:3px;box-sizing:border-box"></div>
<div class="t" style="left:1111px;top:577px;font-size:16px;color:#c0c0c0;font-family:'Liberation Sans',sans-serif;transform:scaleX(0.9);transform-origin:0 0;">2 个...</div>
<svg class="a" style="left:1173px;top:583px;" width="10" height="6" viewBox="0 0 10 6"><path d="M0.5 0.5 L5.0 5.5 L9.5 0.5" stroke="#bbb" stroke-width="1.5" fill="none"/></svg>
<svg class="a" style="left:1194px;top:577px;" width="21" height="18" viewBox="0 0 21 18"><path d="M3 3 H18 M6 0.5 L3 3 L6 5.5 M15 0.5 L18 3 L15 5.5" stroke="#a9a9a9" stroke-width="1.5" fill="none"/><rect x="5" y="8" width="11" height="8.5" stroke="#a9a9a9" stroke-width="1.8" fill="none"/><path d="M0.5 7 V17 M20.5 7 V17" stroke="#a9a9a9" stroke-width="0"/></svg>
<div class="a" style="left:1217px;top:575px;width:27px;height:22px;background:#181818;border:1px solid #1e1e1e;border-radius:3px;box-sizing:border-box"></div>
<svg class="a" style="left:1222px;top:578px;" width="19" height="17" viewBox="0 0 19 17"><path d="M1 1 H17 V10 M1 1 V14 H10" stroke="#a9a9a9" stroke-width="1.6" fill="none"/><path d="M10 3.5 L6 8.5 H9.5 L7.5 12 L12.5 7 H9.5 L11.5 3.5 Z" fill="#a9a9a9"/><path d="M12 12 H18 L15 15.5 Z" fill="#a9a9a9"/></svg>
<svg class="a" style="left:1250px;top:577px;" width="18" height="16" viewBox="0 0 18 16"><path d="M1 5 V14.5 H17 V5" stroke="#a9a9a9" stroke-width="1.6" fill="none"/><rect x="6.5" y="1" width="5" height="4" fill="#a9a9a9"/><path d="M4.5 7 V12 M9 5 V12 M13.5 7 V12" stroke="#a9a9a9" stroke-width="1.6"/></svg>
<svg class="a" style="left:1277px;top:577px;" width="17" height="17" viewBox="0 0 17 17"><rect x="6" y="0.5" width="5.5" height="4.5" fill="#a9a9a9"/><rect x="0" y="11" width="6" height="5.5" fill="#a9a9a9"/><rect x="11" y="11" width="6" height="5.5" fill="#a9a9a9"/><path d="M8.75 5 V8 M3 11 V8 H14 V11" stroke="#a9a9a9" stroke-width="1.4" fill="none"/></svg>
<div class="a" style="left:1300px;top:576px;width:1px;height:20px;background:#2e2e2e;"></div>
<svg class="a" style="left:1308px;top:578px;" width="17" height="17" viewBox="0 0 17 17"><circle cx="8.5" cy="8.5" r="7.8" fill="#a9a9a9"/><circle cx="8.5" cy="8.5" r="3.2" fill="#232323"/><path d="M8.5 0.7 L11 5.5 M16 7 L11 9 M12 15 L8 11 M2 13 L6 9 M2 5 L7 6" stroke="#232323" stroke-width="1.4"/></svg>
<div class="t" style="left:1332px;top:577px;font-size:16.5px;color:#3d8ee0;font-family:'Liberation Sans',sans-serif;transform:scaleX(0.82);transform-origin:0 0;">+0.0</div>
<div class="a" style="left:1605px;top:88px;width:315px;height:35px;background:#222222;"></div>
<div class="t" style="left:1620px;top:96.7px;font-size:15px;color:#d0d0d0;font-family:'Liberation Sans',sans-serif;">Motion-3 - MG©</div>
<svg class="a" style="left:1738px;top:102px;" width="10" height="10" viewBox="0 0 10 10"><rect x="0" y="0" width="10" height="2" fill="#a8a8a8"/><rect x="0" y="4" width="10" height="2" fill="#a8a8a8"/><rect x="0" y="8" width="10" height="2" fill="#a8a8a8"/></svg>
<div class="a" style="left:1619px;top:118px;width:129px;height:2px;background:#cfcfcf;"></div>
<div class="t" style="left:1777px;top:97px;font-size:15px;color:#8c8c8c;font-family:'Liberation Sans',sans-serif;">P9字幕1.0</div>
<div class="a" style="left:1869px;top:91px;width:1px;height:28px;background:#2c2c2c;"></div>
<svg class="a" style="left:1902px;top:101px;" width="13" height="10" viewBox="0 0 13 10"><path d="M1 1 L5 5 L1 9 M7 1 L11 5 L7 9" stroke="#c0c0c0" stroke-width="2" fill="none"/></svg>
<div class="a" style="left:1605px;top:123px;width:315px;height:63px;background:#262626;"></div>
<div class="t" style="left:1619px;top:144px;font-size:19px;color:#c8c8c8;font-family:'Liberation Sans',sans-serif;font-weight:bold;">空 1</div>
<svg class="a" style="left:1801px;top:142px;" width="26" height="25" viewBox="0 0 26 25"><path d="M1 6 V1 H6 M20 1 H25 V6 M25 19 V24 H20 M6 24 H1 V19" stroke="#b0b0b0" stroke-width="1.6" fill="none"/><path d="M6 6 L18 11 L13 12.5 L18 18 L16.5 19.5 L11.5 14 L9.5 18 Z" stroke="#b0b0b0" stroke-width="1.3" fill="none"/></svg>
<svg class="a" style="left:1838px;top:142px;" width="26" height="25" viewBox="0 0 26 25"><path d="M1 6 V1 H6 M20 1 H25 V6 M25 19 V24 H20 M6 24 H1 V19" stroke="#b0b0b0" stroke-width="1.6" fill="none"/><path d="M19 13 H7 M11 9 L7 13 L11 17" stroke="#b0b0b0" stroke-width="1.6" fill="none"/></svg>
<svg class="a" style="left:1876px;top:142px;" width="26" height="25" viewBox="0 0 26 25"><path d="M1 6 V1 H6 M20 1 H25 V6 M25 19 V24 H20 M6 24 H1 V19" stroke="#b0b0b0" stroke-width="1.6" fill="none"/></svg>
<div class="t" style="left:1884px;top:146px;font-size:15px;color:#c8c8c8;font-family:'Liberation Sans',sans-serif;">0</div>
<div class="a" style="left:1606px;top:186px;width:312px;height:272px;background:#3c3c3c;"></div>
<div class="a" style="left:1615px;top:205px;width:96px;height:96px;background:#262626;"></div>
<div class="a" style="left:1729.5px;top:206.3px;width:10px;height:10px;border-radius:5px;background:#242424"></div>
<div class="a" style="left:1729.5px;top:247.5px;width:10px;height:10px;border-radius:5px;background:#242424"></div>
<div class="a" style="left:1729.5px;top:288.3px;width:10px;height:10px;border-radius:5px;background:#242424"></div>
<div class="a" style="left:1770.3px;top:206.3px;width:10px;height:10px;border-radius:5px;background:#242424"></div>
<div class="a" style="left:1770.3px;top:247.5px;width:10px;height:10px;border-radius:5px;background:#242424"></div>
<div class="a" style="left:1770.3px;top:288.3px;width:10px;height:10px;border-radius:5px;background:#242424"></div>
<div class="a" style="left:1811.7px;top:206.3px;width:10px;height:10px;border-radius:5px;background:#242424"></div>
<div class="a" style="left:1811.7px;top:247.5px;width:10px;height:10px;border-radius:5px;background:#242424"></div>
<div class="a" style="left:1811.7px;top:288.3px;width:10px;height:10px;border-radius:5px;background:#242424"></div>
<svg class="a" style="left:1861px;top:198px;" width="23" height="23" viewBox="0 0 23 23"><path d="M1 6 V1 H6 M17 1 H22 V6 M22 17 V22 H17 M6 22 H1 V17" stroke="#b4b4b4" stroke-width="1.6" fill="none"/></svg>
<div class="t" style="left:1857px;top:228.5px;font-size:14px;color:#b4b4b4;font-family:'Liberation Sans',sans-serif;font-weight:bold;transform:scaleX(0.82);transform-origin:0 0;">NULL</div>
<svg class="a" style="left:1863px;top:265px;" width="19" height="18" viewBox="0 0 19 18"><path d="M1 17.5 V8 H7.6 V17.5 Z M11 17.5 V8 H17.6 V17.5 Z" stroke="#b4b4b4" stroke-width="1.4" fill="none"/><circle cx="4.3" cy="4.5" r="3.2" stroke="#b4b4b4" stroke-width="1.4" fill="none"/><circle cx="14.3" cy="4.5" r="3.2" stroke="#b4b4b4" stroke-width="1.4" fill="none"/></svg>
<div class="t" style="left:1852px;top:292.5px;font-size:14px;color:#b4b4b4;font-family:'Liberation Sans',sans-serif;font-weight:bold;transform:scaleX(0.82);transform-origin:0 0;">CLONE</div>
<svg class="a" style="left:1863px;top:329px;" width="19" height="19" viewBox="0 0 19 19"><path d="M1 1 H18 V5 H11.5 V17.5 H7.5 V5 H1 Z" stroke="#b4b4b4" stroke-width="1.4" fill="none"/></svg>
<div class="t" style="left:1836px;top:357px;font-size:14px;color:#b4b4b4;font-family:'Liberation Sans',sans-serif;font-weight:bold;transform:scaleX(0.83);transform-origin:0 0;">TEXT-BREAK</div>
<svg class="a" style="left:1861px;top:392px;" width="23" height="15" viewBox="0 0 23 15"><path d="M1 1 Q9 1 12 9" stroke="#b4b4b4" stroke-width="1.4" fill="none"/><circle cx="19" cy="8.5" r="2.6" stroke="#b4b4b4" stroke-width="1.4" fill="none"/><path d="M0.5 13 H22.5" stroke="#b4b4b4" stroke-width="1.5"/><path d="M11 9 L13 12" stroke="#b4b4b4" stroke-width="1.2"/></svg>
<div class="t" style="left:1856px;top:421px;font-size:14px;color:#b4b4b4;font-family:'Liberation Sans',sans-serif;font-weight:bold;transform:scaleX(0.82);transform-origin:0 0;">JUMP</div>
<div class="a" style="left:1914px;top:196px;width:4px;height:246px;background:#a8a8a8;border-radius:2px"></div>
<svg class="a" style="left:1617px;top:340px;" width="14" height="14" viewBox="0 0 14 14"><circle cx="7" cy="7" r="5.8" stroke="#c0c0c0" stroke-width="1.3" fill="none"/></svg>
<svg class="a" style="left:1637px;top:340px;" width="16" height="14" viewBox="0 0 16 14"><path d="M10.5 1.5 L5 7 L10.5 12.5" stroke="#c0c0c0" stroke-width="1.3" fill="none"/></svg>
<div class="a" style="left:1664px;top:345px;width:132px;height:3px;background:#222222;"></div>
<svg class="a" style="left:1664px;top:348px;" width="14" height="14" viewBox="0 0 14 14"><path d="M1.5 12.5 V5 L6.75 1.2 L12 5 V12.5 Z" fill="#000" stroke="#e0e0e0" stroke-width="1.4"/></svg>
<div class="t" style="left:1809px;top:337px;font-size:14px;color:#d0d0d0;font-family:'Liberation Sans',sans-serif;font-weight:bold;">0</div>
<svg class="a" style="left:1617px;top:385px;" width="14" height="14" viewBox="0 0 14 14"><path d="M7 1 L13 7 L7 13 L1 7 Z" stroke="#c0c0c0" stroke-width="1.3" fill="none"/></svg>
<svg class="a" style="left:1637px;top:385px;" width="16" height="14" viewBox="0 0 16 14"><path d="M2 1.5 L13 12.5 M13 1.5 L2 12.5" stroke="#c0c0c0" stroke-width="1.3" fill="none"/></svg>
<div class="a" style="left:1664px;top:390px;width:132px;height:3px;background:#222222;"></div>
<svg class="a" style="left:1664px;top:393px;" width="14" height="14" viewBox="0 0 14 14"><path d="M1.5 12.5 V5 L6.75 1.2 L12 5 V12.5 Z" fill="#000" stroke="#e0e0e0" stroke-width="1.4"/></svg>
<div class="t" style="left:1809px;top:382px;font-size:14px;color:#d0d0d0;font-family:'Liberation Sans',sans-serif;font-weight:bold;">0</div>
<svg class="a" style="left:1617px;top:430px;" width="14" height="14" viewBox="0 0 14 14"><rect x="1.2" y="1.2" width="11.6" height="11.6" stroke="#c0c0c0" stroke-width="1.3" fill="none"/></svg>
<svg class="a" style="left:1637px;top:430px;" width="16" height="14" viewBox="0 0 16 14"><path d="M5 1.5 L10.5 7 L5 12.5" stroke="#c0c0c0" stroke-width="1.3" fill="none"/></svg>
<div class="a" style="left:1664px;top:435px;width:132px;height:3px;background:#222222;"></div>
<svg class="a" style="left:1664px;top:438px;" width="14" height="14" viewBox="0 0 14 14"><path d="M1.5 12.5 V5 L6.75 1.2 L12 5 V12.5 Z" fill="#000" stroke="#e0e0e0" stroke-width="1.4"/></svg>
<div class="t" style="left:1809px;top:427px;font-size:14px;color:#d0d0d0;font-family:'Liberation Sans',sans-serif;font-weight:bold;">0</div>
<div class="a" style="left:1605px;top:458px;width:315px;height:52px;background:#262626;"></div>
<svg class="a" style="left:1620px;top:480px;" width="22" height="12" viewBox="0 0 22 12"><path d="M0 1 H21.5 M0 5.8 H21.5 M0 10.6 H21.5" stroke="#b0b0b0" stroke-width="1.5"/></svg>
<svg class="a" style="left:1685px;top:476px;" width="22" height="21" viewBox="0 0 22 21"><path d="M1.2 20 Q4 1 10.5 1 Q17 1 19.8 20" stroke="#b0b0b0" stroke-width="1.4" fill="none"/><path d="M10 6.5 V12.5 M7 9.5 H13" stroke="#b0b0b0" stroke-width="1.8"/></svg>
<div class="a" style="left:1720px;top:475.5px;width:24px;height:23px;background:#222;border:2px solid #f0f0f0;box-sizing:border-box"></div>
<svg class="a" style="left:1722px;top:477.5px;" width="20" height="19" viewBox="0 0 20 19"><path d="M1 19 Q3 2 10 2 Q17 2 19 19" stroke="#1a8cf0" stroke-width="2" fill="none"/></svg>
<div class="a" style="left:1749px;top:475px;width:27px;height:24px;background:#000;"></div>
<div class="a" style="left:1750px;top:475.5px;width:24px;height:23px;background:#222;border:2px solid #f0f0f0;box-sizing:border-box"></div>
<svg class="a" style="left:1752px;top:477.5px;" width="20" height="19" viewBox="0 0 20 19"><path d="M1 18 Q7 16 9 6 Q10 1 11 6 Q13 16 19 18" stroke="#1a8cf0" stroke-width="2" fill="none"/></svg>
<div class="a" style="left:1781px;top:475.5px;width:24px;height:23px;background:#222;border:2px solid #f0f0f0;box-sizing:border-box"></div>
<svg class="a" style="left:1783px;top:477.5px;" width="20" height="19" viewBox="0 0 20 19"><path d="M1 0 V14 Q2 17 8 17 H19" stroke="#1a8cf0" stroke-width="2" fill="none"/></svg>
<svg class="a" style="left:1819px;top:482px;" width="20" height="10" viewBox="0 0 20 10"><path d="M1 9 L10 1.5 L19 9" stroke="#b0b0b0" stroke-width="1.5" fill="none"/></svg>
<svg class="a" style="left:1887px;top:475px;" width="14" height="23" viewBox="0 0 14 23"><path d="M9 1 L2 11 L6.5 12 L4.5 22 L12 10 L7.5 9.5 Z" stroke="#b0b0b0" stroke-width="1.3" fill="none"/></svg>
<div class="a" style="left:1605px;top:516px;width:315px;height:320px;background:#232323;"></div>
<div class="t" style="left:1620px;top:524px;font-size:16px;color:#d0d0d0;font-family:'Liberation Sans',sans-serif;">效果和预设</div>
<svg class="a" style="left:1718px;top:530px;" width="10" height="10" viewBox="0 0 10 10"><rect x="0" y="0" width="10" height="2" fill="#a8a8a8"/><rect x="0" y="4" width="10" height="2" fill="#a8a8a8"/><rect x="0" y="8" width="10" height="2" fill="#a8a8a8"/></svg>
<div class="a" style="left:1619px;top:545px;width:109px;height:3px;background:#cfcfcf;"></div>
<div class="t" style="left:1757px;top:524px;font-size:16px;color:#8c8c8c;font-family:'Liberation Sans',sans-serif;">字符</div>
<div class="a" style="left:1612px;top:555px;width:301px;height:23px;background:#161616;border:1px solid #2b2b2b;border-radius:3px;box-sizing:border-box"></div>
<svg class="a" style="left:1620px;top:559px;" width="22" height="15" viewBox="0 0 22 15"><circle cx="9.5" cy="5.3" r="4.6" stroke="#aaaaaa" stroke-width="1.5" fill="none"/><path d="M6.2 8.6 L0.8 14" stroke="#aaaaaa" stroke-width="1.6"/><path d="M14.5 9.5 L21.5 9.5 L18 13 Z" fill="#aaaaaa"/></svg>
<div class="a" style="left:1606px;top:581px;width:307px;height:2px;background:#0e0e0e;"></div>
<div class="a" style="left:1606px;top:583.0px;width:291px;height:21px;background:#262626;"></div>
<div class="a" style="left:1606px;top:603.2px;width:291px;height:1px;background:#212121;"></div>
<svg class="a" style="left:1613px;top:589.0px;" width="5" height="9" viewBox="0 0 5 9"><path d="M0.5 0.5 L4.5 4.5 L0.5 8.5" stroke="#a0a0a0" stroke-width="1.2" fill="none"/></svg>
<div class="t" style="left:1625px;top:585.0px;font-size:15px;color:#c8c8c8;font-family:'Liberation Mono',monospace;transform:scaleX(0.9);transform-origin:0 0;">*</div>
<div class="t" style="left:1639px;top:584.5px;font-size:14px;color:#c8c8c8;font-family:'Liberation Sans',sans-serif;">动画预设</div>
<div class="a" style="left:1606px;top:604.2px;width:291px;height:21px;background:#262626;"></div>
<div class="a" style="left:1606px;top:624.4000000000001px;width:291px;height:1px;background:#212121;"></div>
<svg class="a" style="left:1613px;top:610.2px;" width="5" height="9" viewBox="0 0 5 9"><path d="M0.5 0.5 L4.5 4.5 L0.5 8.5" stroke="#a0a0a0" stroke-width="1.2" fill="none"/></svg>
<div class="t" style="left:1625px;top:607.2px;font-size:14px;color:#c8c8c8;font-family:'Liberation Mono',monospace;transform:scaleX(0.835);transform-origin:0 0;">3D</div>
<div class="t" style="left:1646px;top:605.7px;font-size:14px;color:#c8c8c8;font-family:'Liberation Sans',sans-serif;">声道</div>
<div class="a" style="left:1606px;top:625.4px;width:291px;height:21px;background:#262626;"></div>
<div class="a" style="left:1606px;top:645.6px;width:291px;height:1px;background:#212121;"></div>
<svg class="a" style="left:1613px;top:631.4px;" width="5" height="9" viewBox="0 0 5 9"><path d="M0.5 0.5 L4.5 4.5 L0.5 8.5" stroke="#a0a0a0" stroke-width="1.2" fill="none"/></svg>
<div class="t" style="left:1625px;top:628.4px;font-size:14px;color:#c8c8c8;font-family:'Liberation Mono',monospace;transform:scaleX(0.835);transform-origin:0 0;">Boris FX Mocha</div>
<div class="a" style="left:1606px;top:646.6px;width:291px;height:21px;background:#262626;"></div>
<div class="a" style="left:1606px;top:666.8000000000001px;width:291px;height:1px;background:#212121;"></div>
<svg class="a" style="left:1613px;top:652.6px;" width="5" height="9" viewBox="0 0 5 9"><path d="M0.5 0.5 L4.5 4.5 L0.5 8.5" stroke="#a0a0a0" stroke-width="1.2" fill="none"/></svg>
<div class="t" style="left:1625px;top:649.6px;font-size:14px;color:#c8c8c8;font-family:'Liberation Mono',monospace;transform:scaleX(0.835);transform-origin:0 0;">CINEMA 4D</div>
<div class="a" style="left:1606px;top:667.8px;width:291px;height:21px;background:#262626;"></div>
<div class="a" style="left:1606px;top:688.0px;width:291px;height:1px;background:#212121;"></div>
<svg class="a" style="left:1613px;top:673.8px;" width="5" height="9" viewBox="0 0 5 9"><path d="M0.5 0.5 L4.5 4.5 L0.5 8.5" stroke="#a0a0a0" stroke-width="1.2" fill="none"/></svg>
<div class="t" style="left:1625px;top:670.8px;font-size:14px;color:#c8c8c8;font-family:'Liberation Mono',monospace;transform:scaleX(0.835);transform-origin:0 0;">F’s Plugins-Channel</div>
<div class="a" style="left:1606px;top:689.0px;width:291px;height:21px;background:#262626;"></div>
<div class="a" style="left:1606px;top:709.2px;width:291px;height:1px;background:#212121;"></div>
<svg class="a" style="left:1613px;top:695.0px;" width="5" height="9" viewBox="0 0 5 9"><path d="M0.5 0.5 L4.5 4.5 L0.5 8.5" stroke="#a0a0a0" stroke-width="1.2" fill="none"/></svg>
<div class="t" style="left:1625px;top:692.0px;font-size:14px;color:#c8c8c8;font-family:'Liberation Mono',monospace;transform:scaleX(0.835);transform-origin:0 0;">F’s Plugins-Draw</div>
<div class="a" style="left:1606px;top:710.2px;width:291px;height:21px;background:#262626;"></div>
<div class="a" style="left:1606px;top:730.4000000000001px;width:291px;height:1px;background:#212121;"></div>
<svg class="a" style="left:1613px;top:716.2px;" width="5" height="9" viewBox="0 0 5 9"><path d="M0.5 0.5 L4.5 4.5 L0.5 8.5" stroke="#a0a0a0" stroke-width="1.2" fill="none"/></svg>
<div class="t" style="left:1625px;top:713.2px;font-size:14px;color:#c8c8c8;font-family:'Liberation Mono',monospace;transform:scaleX(0.835);transform-origin:0 0;">F’s Plugins-Fx</div>
<div class="a" style="left:1606px;top:731.4px;width:291px;height:21px;background:#262626;"></div>
<div class="a" style="left:1606px;top:751.6px;width:291px;height:1px;background:#212121;"></div>
<svg class="a" style="left:1613px;top:737.4px;" width="5" height="9" viewBox="0 0 5 9"><path d="M0.5 0.5 L4.5 4.5 L0.5 8.5" stroke="#a0a0a0" stroke-width="1.2" fill="none"/></svg>
<div class="t" style="left:1625px;top:734.4px;font-size:14px;color:#c8c8c8;font-family:'Liberation Mono',monospace;transform:scaleX(0.835);transform-origin:0 0;">F’s Plugins-Paint</div>
<div class="a" style="left:1606px;top:752.6px;width:291px;height:21px;background:#262626;"></div>
<div class="a" style="left:1606px;top:772.8000000000001px;width:291px;height:1px;background:#212121;"></div>
<svg class="a" style="left:1613px;top:758.6px;" width="5" height="9" viewBox="0 0 5 9"><path d="M0.5 0.5 L4.5 4.5 L0.5 8.5" stroke="#a0a0a0" stroke-width="1.2" fill="none"/></svg>
<div class="t" style="left:1625px;top:755.6px;font-size:14px;color:#c8c8c8;font-family:'Liberation Mono',monospace;transform:scaleX(0.835);transform-origin:0 0;">F’s Plugins-Script</div>
<div class="a" style="left:1606px;top:773.8px;width:291px;height:21px;background:#262626;"></div>
<div class="a" style="left:1606px;top:794.0px;width:291px;height:1px;background:#212121;"></div>
<svg class="a" style="left:1613px;top:779.8px;" width="5" height="9" viewBox="0 0 5 9"><path d="M0.5 0.5 L4.5 4.5 L0.5 8.5" stroke="#a0a0a0" stroke-width="1.2" fill="none"/></svg>
<div class="t" style="left:1625px;top:776.8px;font-size:14px;color:#c8c8c8;font-family:'Liberation Mono',monospace;transform:scaleX(0.835);transform-origin:0 0;">JAe Tools</div>
<div class="a" style="left:1606px;top:795.0px;width:291px;height:21px;background:#262626;"></div>
<div class="a" style="left:1606px;top:815.2px;width:291px;height:1px;background:#212121;"></div>
<svg class="a" style="left:1613px;top:801.0px;" width="5" height="9" viewBox="0 0 5 9"><path d="M0.5 0.5 L4.5 4.5 L0.5 8.5" stroke="#a0a0a0" stroke-width="1.2" fill="none"/></svg>
<div class="t" style="left:1625px;top:798.0px;font-size:14px;color:#c8c8c8;font-family:'Liberation Mono',monospace;transform:scaleX(0.835);transform-origin:0 0;">Keying</div>
<div class="a" style="left:1897px;top:583px;width:23px;height:233px;background:#232323;"></div>
<div class="a" style="left:1899px;top:584px;width:18px;height:64px;background:#343434;border-radius:9px"></div>
<div class="a" style="left:1908px;top:662px;width:12px;height:72px;background:#2b3038;border-radius:3px 0 0 3px"></div>
<div class="a" style="left:1911px;top:667.0px;width:9px;height:1.5px;background:#3a4250;"></div>
<div class="a" style="left:1911px;top:671.5px;width:9px;height:1.5px;background:#3a4250;"></div>
<div class="a" style="left:1911px;top:676.0px;width:9px;height:1.5px;background:#3a4250;"></div>
<div class="a" style="left:1911px;top:680.5px;width:9px;height:1.5px;background:#3a4250;"></div>
<div class="a" style="left:1911px;top:685.0px;width:9px;height:1.5px;background:#3a4250;"></div>
<div class="a" style="left:1911px;top:689.5px;width:9px;height:1.5px;background:#c8b040;"></div>
<div class="a" style="left:1911px;top:694.0px;width:9px;height:1.5px;background:#c8b040;"></div>
<div class="a" style="left:1911px;top:698.5px;width:9px;height:1.5px;background:#8eb84a;"></div>
<div class="a" style="left:1911px;top:703.0px;width:9px;height:1.5px;background:#8eb84a;"></div>
<div class="a" style="left:1911px;top:707.5px;width:9px;height:1.5px;background:#8eb84a;"></div>
<div class="a" style="left:1911px;top:712.0px;width:9px;height:1.5px;background:#3ab8a0;"></div>
<div class="a" style="left:1911px;top:716.5px;width:9px;height:1.5px;background:#3ab8a0;"></div>
<div class="a" style="left:1911px;top:721.0px;width:9px;height:1.5px;background:#3ab8a0;"></div>
<div class="a" style="left:1911px;top:725.5px;width:9px;height:1.5px;background:#3ab8a0;"></div>
<div class="a" style="left:1606px;top:815px;width:291px;height:2px;background:#0c0c0c;"></div>
<div class="a" style="left:1606px;top:817px;width:290px;height:19px;background:#222;"></div>
<div class="a" style="left:1896px;top:815px;width:1px;height:21px;background:#0c0c0c;"></div>
<svg class="a" style="left:1873px;top:819px;" width="16" height="15" viewBox="0 0 16 15"><path d="M4 0 H16 V15 H4 L0 11 V4 Z" fill="#b8b8b8"/><path d="M0 10 L5 10 L5 15" stroke="#222" stroke-width="1.2" fill="none"/></svg>
<div class="a" style="left:1605px;top:842px;width:315px;height:186px;background:#232323;"></div>
<div class="t" style="left:1621px;top:851px;font-size:16px;color:#8f8f8f;font-family:'Liberation Sans',sans-serif;">对齐</div>
<div class="t" style="left:1707px;top:851px;font-size:16px;color:#8f8f8f;font-family:'Liberation Sans',sans-serif;">段落</div>
<div class="t" style="left:1793px;top:851px;font-size:16px;color:#d0d0d0;font-family:'Liberation Sans',sans-serif;">信息</div>
<svg class="a" style="left:1840px;top:858px;" width="10" height="10" viewBox="0 0 10 10"><rect x="0" y="0" width="10" height="2" fill="#a8a8a8"/><rect x="0" y="4" width="10" height="2" fill="#a8a8a8"/><rect x="0" y="8" width="10" height="2" fill="#a8a8a8"/></svg>
<div class="a" style="left:1791px;top:873px;width:60px;height:2px;background:#cfcfcf;"></div>
<div class="a" style="left:1615px;top:900px;width:25px;height:25px;background:#000;"></div>
<div class="t" style="left:1647px;top:884.0px;font-size:14px;color:#9aa3ad;font-family:'Liberation Sans',sans-serif;">R :</div>
<div class="t" style="left:1647px;top:900.3px;font-size:14px;color:#9aa3ad;font-family:'Liberation Sans',sans-serif;">G :</div>
<div class="t" style="left:1647px;top:916.6px;font-size:14px;color:#9aa3ad;font-family:'Liberation Sans',sans-serif;">B :</div>
<div class="t" style="left:1647px;top:932.9px;font-size:14px;color:#9aa3ad;font-family:'Liberation Sans',sans-serif;">A :</div>
<div class="t" style="left:1672px;top:933px;font-size:14px;color:#9aa3ad;font-family:'Liberation Sans',sans-serif;">0</div>
<div class="a" style="left:1732px;top:888px;width:1px;height:60px;background:#2e2e2e;"></div>
<svg class="a" style="left:1745px;top:914px;" width="12" height="12" viewBox="0 0 12 12"><path d="M6 0 V12 M0 6 H12" stroke="#d0d0d0" stroke-width="1.3"/></svg>
<div class="t" style="left:1761px;top:883px;font-size:14px;color:#9aa3ad;font-family:'Liberation Sans',sans-serif;">X : -432</div>
<div class="t" style="left:1761px;top:899px;font-size:14px;color:#9aa3ad;font-family:'Liberation Sans',sans-serif;">Y : 2008</div>
<div class="a" style="left:1613px;top:957px;width:307px;height:1px;background:#2e2e2e;"></div>
<div class="t" style="left:1614px;top:962px;font-size:15px;color:#a8a8a8;font-family:'Liberation Sans',sans-serif;">摄像机 1</div>
<div class="t" style="left:1614px;top:980px;font-size:15px;color:#a8a8a8;font-family:'Liberation Sans',sans-serif;">持续时间: <span style="color:#9aa3ad">00360</span></div>
<div class="t" style="left:1614px;top:998px;font-size:15px;color:#a8a8a8;font-family:'Liberation Sans',sans-serif;">入: <span style="color:#9aa3ad">00001</span>， 出: <span style="color:#9aa3ad">00360</span></div>
<div class="a" style="left:0px;top:605px;width:1600px;height:425px;background:#161616;"></div>
<div class="a" style="left:1px;top:606px;width:1598px;height:423px;border:1px solid #2d8ceb;box-sizing:border-box;background:#232323"></div>
<svg class="a" style="left:15px;top:621px;" width="7" height="7" viewBox="0 0 7 7"><path d="M0.5 0.5 L6.5 6.5 M6.5 0.5 L0.5 6.5" stroke="#b8b8b8" stroke-width="1.2"/></svg>
<div class="a" style="left:33px;top:616px;width:13px;height:12px;background:#ae9d7c;"></div>
<div class="t" style="left:60px;top:614.5px;font-size:17px;color:#d0d0d0;font-family:'Liberation Sans',sans-serif;">快速定位</div>
<svg class="a" style="left:139px;top:620px;" width="11" height="10" viewBox="0 0 11 10"><rect x="0" y="0" width="11" height="2" fill="#a8a8a8"/><rect x="0" y="4" width="11" height="2" fill="#a8a8a8"/><rect x="0" y="8" width="11" height="2" fill="#a8a8a8"/></svg>
<div class="a" style="left:15px;top:636px;width:135px;height:2px;background:#cfcfcf;"></div>
<div class="t" style="left:195px;top:613px;font-size:17px;color:#8c8c8c;font-family:'Liberation Sans',sans-serif;">渲染队列</div>
<div class="t" style="left:69px;top:645px;font-size:18px;color:#f4f4f4;font-family:'Liberation Sans',sans-serif;font-weight:bold;letter-spacing:0.6px">00015</div>
<div class="t" style="left:14px;top:666px;font-size:13px;color:#a8a8a8;font-family:'Liberation Mono',monospace;transform:scaleX(0.895);transform-origin:0 0;">0:00:00:14 (30.00 fps)</div>
<div class="a" style="left:192px;top:651px;width:468px;height:24px;background:#161616;border:1px solid #2b2b2b;border-radius:3px;box-sizing:border-box"></div>
<svg class="a" style="left:201px;top:655px;" width="22" height="15" viewBox="0 0 22 15"><circle cx="9.5" cy="5.3" r="4.6" stroke="#aaaaaa" stroke-width="1.5" fill="none"/><path d="M6.2 8.6 L0.8 14" stroke="#aaaaaa" stroke-width="1.6"/><path d="M14.5 9.5 L21.5 9.5 L18 13 Z" fill="#aaaaaa"/></svg>
<svg class="a" style="left:680px;top:652px;" width="23" height="20" viewBox="0 0 23 20"><rect x="0" y="2" width="6" height="3.5" fill="#a9a9a9"/><path d="M6 3.8 H14 M9 3.8 V14 H14 M9 9 H14" stroke="#a9a9a9" stroke-width="1.4" fill="none"/><rect x="13" y="2" width="6" height="3.5" fill="#a9a9a9"/><rect x="13" y="7.2" width="6" height="3.5" fill="#a9a9a9"/><rect x="13" y="12.3" width="6" height="3.5" fill="#a9a9a9"/><path d="M16 17 H21 L18.5 19.5 Z" fill="#a9a9a9"/></svg>
<svg class="a" style="left:721px;top:652px;" width="22" height="20" viewBox="0 0 22 20"><path d="M4 0 L5 3 L8 2 L6 5 L9 6 L6 7 L7 10 L4 8 L2 10 L2.5 7 L0 6 L3 5 L1.5 2 Z" fill="#a9a9a9"/><path d="M9 10 L15 7 L21 10 V17 L15 20 L9 17 Z M9 10 L15 13 L21 10 M15 13 V20" stroke="#a9a9a9" stroke-width="1.4" fill="none"/></svg>
<svg class="a" style="left:764px;top:652px;" width="23" height="20" viewBox="0 0 23 20"><path d="M5 9 Q5 1 11.5 1 Q18 1 18 9 Z" fill="#a9a9a9"/><circle cx="9" cy="5.5" r="1.5" fill="#232323"/><circle cx="14" cy="5.5" r="1.5" fill="#232323"/><rect x="10" y="9" width="3" height="6" fill="#a9a9a9"/><rect x="0" y="11" width="23" height="8" fill="#8a8a8a"/><rect x="10" y="11" width="3" height="4" fill="#a9a9a9"/></svg>
<svg class="a" style="left:798px;top:652px;" width="20" height="20" viewBox="0 0 20 20"><rect x="4" y="0.8" width="15" height="14" stroke="#a9a9a9" stroke-width="1.5" fill="#303030"/><rect x="7" y="6" width="9" height="3" fill="#a9a9a9"/><path d="M2 3 V17 H16 M0.7 5 V19 H14" stroke="#a9a9a9" stroke-width="1.3" fill="none"/><path d="M6 1 V15 M17 1 V15" stroke="#a9a9a9" stroke-width="1" stroke-dasharray="1 1.5"/></svg>
<svg class="a" style="left:831px;top:653px;" width="19" height="19" viewBox="0 0 19 19"><circle cx="12.5" cy="6.5" r="5.8" fill="#5a5a5a" stroke="#a9a9a9" stroke-width="1.3"/><path d="M6.5 6.5 A5.8 5.8 0 0 0 10.5 13.5 M4 9 A5.8 5.8 0 0 0 8 16 M1.5 11.5 A5.8 5.8 0 0 0 5.5 18" stroke="#a9a9a9" stroke-width="1.3" fill="none"/></svg>
<svg class="a" style="left:872px;top:652px;" width="22" height="20" viewBox="0 0 22 20"><rect x="1" y="3" width="19" height="16" stroke="#a9a9a9" stroke-width="1.5" fill="none"/><path d="M4 6 Q8 6 10 11 Q12 16 17 16" stroke="#a9a9a9" stroke-width="1.4" fill="none"/><path d="M4 0 V3 M8 0 V3 M12 0 V3 M16 0 V3" stroke="#a9a9a9" stroke-width="1"/></svg>
<div class="a" style="left:2px;top:684px;width:1595px;height:2px;background:#151515;"></div>
<div class="a" style="left:2px;top:686px;width:910px;height:22px;background:#2b2b2b;"></div>
<div class="a" style="left:2px;top:708px;width:1595px;height:2px;background:#151515;"></div>
<svg class="a" style="left:8px;top:693px;" width="16" height="11" viewBox="0 0 16 11"><path d="M0.5 5.5 Q8 -2 15.5 5.5 Q8 13 0.5 5.5 Z" fill="#a9a9a9"/><circle cx="8" cy="5.5" r="2.8" fill="#2b2b2b"/><circle cx="8.7" cy="4.9" r="1.3" fill="#a9a9a9"/></svg>
<svg class="a" style="left:27px;top:691px;" width="16" height="15" viewBox="0 0 16 15"><path d="M0.5 4.5 H4 L9 0.5 V14.5 L4 10.5 H0.5 Z" fill="#a9a9a9"/><path d="M11 4 Q13 7.5 11 11 M13 2 Q16.5 7.5 13 13" stroke="#a9a9a9" stroke-width="1.4" fill="none"/></svg>
<div class="a" style="left:49px;top:694px;width:9px;height:9px;border-radius:5px;background:#a9a9a9"></div>
<svg class="a" style="left:66px;top:690px;" width="13" height="15" viewBox="0 0 13 15"><path d="M3 7 V4.5 A3.5 3.5 0 0 1 10 4.5 V7" stroke="#a9a9a9" stroke-width="1.8" fill="none"/><rect x="0.5" y="7" width="12" height="8" fill="#a9a9a9"/><rect x="5.5" y="9.5" width="2" height="3" fill="#2b2b2b"/></svg>
<div class="a" style="left:87px;top:691px;width:1px;height:12px;background:#1a1a1a;"></div>
<div class="a" style="left:126px;top:691px;width:1px;height:12px;background:#1a1a1a;"></div>
<div class="a" style="left:153px;top:691px;width:1px;height:12px;background:#1a1a1a;"></div>
<div class="a" style="left:367px;top:691px;width:1px;height:12px;background:#1a1a1a;"></div>
<div class="a" style="left:538px;top:691px;width:1px;height:12px;background:#1a1a1a;"></div>
<div class="a" style="left:746px;top:691px;width:1px;height:12px;background:#1a1a1a;"></div>
<div class="a" style="left:892px;top:691px;width:1px;height:12px;background:#1a1a1a;"></div>
<svg class="a" style="left:103px;top:690px;" width="16" height="16" viewBox="0 0 16 16"><path d="M0.5 1.5 Q0.5 0.5 1.5 0.5 L7 0.5 L15 8.5 L8.5 15 L0.5 7 Z" fill="#a9a9a9"/><circle cx="4" cy="4" r="1.4" fill="#2b2b2b"/></svg>
<div class="t" style="left:134px;top:690px;font-size:13px;color:#8aa0c0;font-family:'Liberation Sans',sans-serif;">#</div>
<div class="t" style="left:161px;top:689.5px;font-size:17px;color:#c8c8c8;font-family:'Liberation Sans',sans-serif;">图层名称</div>
<svg class="a" style="left:375px;top:692px;" width="16" height="15" viewBox="0 0 16 15"><path d="M2.5 8 Q2.5 0.5 8 0.5 Q13.5 0.5 13.5 8 Z" fill="#a9a9a9"/><circle cx="5.8" cy="4.8" r="1.3" fill="#2b2b2b"/><circle cx="10.2" cy="4.8" r="1.3" fill="#2b2b2b"/><rect x="6.8" y="8" width="2.4" height="6" fill="#a9a9a9"/><path d="M0 11 H6.5 M9.5 11 H16" stroke="#a9a9a9" stroke-width="1.4"/></svg>
<svg class="a" style="left:394px;top:693px;" width="14" height="14" viewBox="0 0 14 14"><circle cx="7" cy="7" r="3" stroke="#a9a9a9" stroke-width="1.3" fill="none"/><path d="M7 0 V3 M7 11 V14 M0 7 H3 M11 7 H14 M2 2 L4 4 M10 10 L12 12 M12 2 L10 4 M4 10 L2 12" stroke="#a9a9a9" stroke-width="1.2"/></svg>
<svg class="a" style="left:412px;top:692px;" width="14" height="14" viewBox="0 0 14 14"><path d="M1 1 L13 13" stroke="#a9a9a9" stroke-width="1.8" stroke-dasharray="2 1"/></svg>
<div class="t" style="left:431px;top:688px;font-size:17px;color:#a9a9a9;font-family:'Liberation Serif',serif;"><i>fx</i></div>
<svg class="a" style="left:448px;top:691px;" width="18" height="16" viewBox="0 0 18 16"><path d="M1 4 V15.5 H13" stroke="#a9a9a9" stroke-width="1.3" fill="none"/><rect x="4" y="0.5" width="13.5" height="12" fill="#a9a9a9"/><rect x="6.5" y="2" width="8.5" height="9" fill="#2b2b2b"/><rect x="6.5" y="3" width="8.5" height="7" fill="#a9a9a9"/><rect x="8" y="6" width="5.5" height="1.3" fill="#2b2b2b"/><path d="M5.2 2 V11 M16.3 2 V11" stroke="#2b2b2b" stroke-width="0.8" stroke-dasharray="1 1.2"/></svg>
<svg class="a" style="left:466px;top:690px;" width="19" height="18" viewBox="0 0 19 18"><circle cx="12.5" cy="6.3" r="5.8" fill="#5a5a5a" stroke="#a9a9a9" stroke-width="1.2"/><path d="M6.5 6.5 A5.8 5.8 0 0 0 10 13.5 M4 9 A5.8 5.8 0 0 0 7.5 16 M1.5 11.5 A5.8 5.8 0 0 0 5 17.8" stroke="#a9a9a9" stroke-width="1.2" fill="none"/></svg>
<svg class="a" style="left:487px;top:692px;" width="15" height="15" viewBox="0 0 15 15"><circle cx="7.5" cy="7.5" r="6.5" fill="none" stroke="#a9a9a9" stroke-width="1.3"/><path d="M12.1 2.9 L2.9 12.1 A6.5 6.5 0 0 0 12.1 2.9 Z" fill="#a9a9a9"/></svg>
<svg class="a" style="left:505px;top:691px;" width="16" height="16" viewBox="0 0 16 16"><path d="M8 0.8 L15 4.3 V11.7 L8 15.2 L1 11.7 V4.3 Z M1 4.3 L8 7.8 L15 4.3 M8 7.8 V15.2" stroke="#a9a9a9" stroke-width="1.4" fill="none"/></svg>
<div class="t" style="left:546px;top:688.5px;font-size:17px;color:#c8c8c8;font-family:'Liberation Sans',sans-serif;">模式</div>
<div class="t" style="left:642px;top:690px;font-size:14px;color:#a8b0bc;font-family:'Liberation Sans',sans-serif;">T</div>
<div class="t" style="left:664px;top:688px;font-size:16.5px;color:#a8b0bc;font-family:'Liberation Sans',sans-serif;transform:scaleX(0.82);transform-origin:0 0;">TrkMat</div>
<div class="t" style="left:754px;top:688.5px;font-size:17px;color:#c8c8c8;font-family:'Liberation Sans',sans-serif;">父级和链接</div>
<div class="a" style="left:912px;top:648px;width:1px;height:359px;background:#0e0e0e;"></div>
<div class="a" style="left:913px;top:610px;width:663px;height:74px;background:#232323;"></div>
<div class="a" style="left:913px;top:648px;width:655px;height:11px;background:#3a3630;"></div>
<div class="a" style="left:921px;top:648px;width:186px;height:11px;background:#6a6a6a;"></div>
<div class="a" style="left:913px;top:648px;width:9px;height:11px;background:#2d8ceb;border-radius:5px 0 0 5px"></div>
<div class="a" style="left:1105px;top:648px;width:9px;height:11px;background:#2d8ceb;border-radius:0 5px 5px 0"></div>
<div class="a" style="left:946.5px;top:648px;width:1.5px;height:11px;background:#2d8ceb;"></div>
<svg class="a" style="left:1567px;top:645px;" width="9" height="16" viewBox="0 0 9 16"><path d="M0 3 L3 0 H9 V16 H0 Z" fill="#1c1c1c"/></svg>
<div class="a" style="left:913px;top:660px;width:663px;height:25px;overflow:hidden">
<div class="t" style="left:-10.600000000000001px;top:0px;width:37px;text-align:center;font-size:14px;transform:scaleX(0.9);color:#c8c8c8;font-family:'Liberation Sans',sans-serif">00001</div>
<div class="a" style="left:9.0px;top:18px;width:1px;height:6px;background:#9a9a9a"></div>
<div class="t" style="left:53.350000000000044px;top:0px;width:37px;text-align:center;font-size:14px;transform:scaleX(0.9);color:#c8c8c8;font-family:'Liberation Sans',sans-serif">00011</div>
<div class="a" style="left:72.95000000000005px;top:18px;width:1px;height:6px;background:#9a9a9a"></div>
<div class="t" style="left:117.3000000000001px;top:0px;width:37px;text-align:center;font-size:14px;transform:scaleX(0.9);color:#c8c8c8;font-family:'Liberation Sans',sans-serif">00021</div>
<div class="a" style="left:136.9000000000001px;top:18px;width:1px;height:6px;background:#9a9a9a"></div>
<div class="t" style="left:181.24999999999991px;top:0px;width:37px;text-align:center;font-size:14px;transform:scaleX(0.9);color:#c8c8c8;font-family:'Liberation Sans',sans-serif">00031</div>
<div class="a" style="left:200.8499999999999px;top:18px;width:1px;height:6px;background:#9a9a9a"></div>
<div class="t" style="left:245.19999999999996px;top:0px;width:37px;text-align:center;font-size:14px;transform:scaleX(0.9);color:#c8c8c8;font-family:'Liberation Sans',sans-serif">00041</div>
<div class="a" style="left:264.79999999999995px;top:18px;width:1px;height:6px;background:#9a9a9a"></div>
<div class="t" style="left:309.15px;top:0px;width:37px;text-align:center;font-size:14px;transform:scaleX(0.9);color:#c8c8c8;font-family:'Liberation Sans',sans-serif">00051</div>
<div class="a" style="left:328.75px;top:18px;width:1px;height:6px;background:#9a9a9a"></div>
<div class="t" style="left:373.1px;top:0px;width:37px;text-align:center;font-size:14px;transform:scaleX(0.9);color:#c8c8c8;font-family:'Liberation Sans',sans-serif">00061</div>
<div class="a" style="left:392.70000000000005px;top:18px;width:1px;height:6px;background:#9a9a9a"></div>
<div class="t" style="left:437.05000000000007px;top:0px;width:37px;text-align:center;font-size:14px;transform:scaleX(0.9);color:#c8c8c8;font-family:'Liberation Sans',sans-serif">00071</div>
<div class="a" style="left:456.6500000000001px;top:18px;width:1px;height:6px;background:#9a9a9a"></div>
<div class="t" style="left:500.9999999999999px;top:0px;width:37px;text-align:center;font-size:14px;transform:scaleX(0.9);color:#c8c8c8;font-family:'Liberation Sans',sans-serif">00081</div>
<div class="a" style="left:520.5999999999999px;top:18px;width:1px;height:6px;background:#9a9a9a"></div>
<div class="t" style="left:564.9500000000002px;top:0px;width:37px;text-align:center;font-size:14px;transform:scaleX(0.9);color:#c8c8c8;font-family:'Liberation Sans',sans-serif">00091</div>
<div class="a" style="left:584.5500000000002px;top:18px;width:1px;height:6px;background:#9a9a9a"></div>
<div class="t" style="left:628.9px;top:0px;width:37px;text-align:center;font-size:14px;transform:scaleX(0.9);color:#c8c8c8;font-family:'Liberation Sans',sans-serif">00101</div>
<div class="a" style="left:648.5px;top:18px;width:1px;height:6px;background:#9a9a9a"></div>
</div>
<div class="a" style="left:913px;top:683px;width:663px;height:2px;background:#121212;"></div>
<div class="a" style="left:913px;top:685px;width:663px;height:20px;background:#333;"></div>
<div class="a" style="left:921px;top:685px;width:655px;height:19px;background:#616161;"></div>
<div class="a" style="left:915px;top:686px;width:7px;height:19px;background:#2d8ceb;border-radius:7px 0 0 7px"></div>
<div class="a" style="left:913px;top:704px;width:663px;height:2px;background:#1b1b1b;"></div>
<div class="a" style="left:922px;top:706px;width:654px;height:3px;background:#13c41c;"></div>
<div class="a" style="left:913px;top:709px;width:663px;height:1px;background:#1b1b1b;"></div>
<div class="a" style="left:1576px;top:610px;width:21px;height:397px;background:#242424;"></div>
<div class="a" style="left:1576px;top:684px;width:21px;height:26px;background:#262626;"></div>
<div class="a" style="left:1576px;top:708px;width:21px;height:2px;background:#151515;"></div>
<svg class="a" style="left:1581px;top:687px;" width="14" height="18" viewBox="0 0 14 18"><path d="M0 0 H14 V12 L7 18 L0 12 Z" fill="#b8b8b8"/></svg>
<div class="a" style="left:2px;top:710px;width:910px;height:24px;background:#303030;"></div>
<div class="a" style="left:2px;top:733.5px;width:910px;height:1.5px;background:#1e1e1e;"></div>
<div class="a" style="left:913px;top:710px;width:663px;height:25px;background:#333333;"></div>
<div class="a" style="left:913px;top:733.5px;width:663px;height:1.5px;background:#222222;"></div>
<div class="a" style="left:913px;top:710px;width:9px;height:24px;background:#303030;"></div>
<div class="a" style="left:1576px;top:710px;width:21px;height:25px;background:#232323;"></div>
<div class="a" style="left:2px;top:735px;width:910px;height:24px;background:#262626;"></div>
<div class="a" style="left:2px;top:758.5px;width:910px;height:1.5px;background:#1e1e1e;"></div>
<div class="a" style="left:913px;top:735px;width:663px;height:25px;background:#333333;"></div>
<div class="a" style="left:913px;top:758.5px;width:663px;height:1.5px;background:#222222;"></div>
<div class="a" style="left:913px;top:735px;width:9px;height:24px;background:#262626;"></div>
<div class="a" style="left:1576px;top:735px;width:21px;height:25px;background:#232323;"></div>
<div class="a" style="left:2px;top:760px;width:910px;height:24px;background:#474747;"></div>
<div class="a" style="left:2px;top:783.5px;width:910px;height:1.5px;background:#1e1e1e;"></div>
<div class="a" style="left:913px;top:760px;width:663px;height:25px;background:#333333;"></div>
<div class="a" style="left:913px;top:783.5px;width:663px;height:1.5px;background:#222222;"></div>
<div class="a" style="left:913px;top:760px;width:9px;height:24px;background:#474747;"></div>
<div class="a" style="left:1576px;top:760px;width:21px;height:25px;background:#232323;"></div>
<div class="a" style="left:2px;top:785px;width:910px;height:24px;background:#303030;"></div>
<div class="a" style="left:2px;top:808.5px;width:910px;height:1.5px;background:#1e1e1e;"></div>
<div class="a" style="left:913px;top:785px;width:663px;height:25px;background:#333333;"></div>
<div class="a" style="left:913px;top:808.5px;width:663px;height:1.5px;background:#222222;"></div>
<div class="a" style="left:913px;top:785px;width:9px;height:24px;background:#303030;"></div>
<div class="a" style="left:1576px;top:785px;width:21px;height:25px;background:#232323;"></div>
<div class="a" style="left:2px;top:810px;width:910px;height:24px;background:#262626;"></div>
<div class="a" style="left:2px;top:833.5px;width:910px;height:1.5px;background:#1e1e1e;"></div>
<div class="a" style="left:913px;top:810px;width:663px;height:25px;background:#333333;"></div>
<div class="a" style="left:913px;top:833.5px;width:663px;height:1.5px;background:#222222;"></div>
<div class="a" style="left:913px;top:810px;width:9px;height:24px;background:#262626;"></div>
<div class="a" style="left:1576px;top:810px;width:21px;height:25px;background:#232323;"></div>
<div class="a" style="left:2px;top:835px;width:910px;height:24px;background:#303030;"></div>
<div class="a" style="left:2px;top:858.5px;width:910px;height:1.5px;background:#1e1e1e;"></div>
<div class="a" style="left:913px;top:835px;width:663px;height:25px;background:#333333;"></div>
<div class="a" style="left:913px;top:858.5px;width:663px;height:1.5px;background:#222222;"></div>
<div class="a" style="left:913px;top:835px;width:9px;height:24px;background:#303030;"></div>
<div class="a" style="left:1576px;top:835px;width:21px;height:25px;background:#232323;"></div>
<div class="a" style="left:2px;top:860px;width:910px;height:24px;background:#262626;"></div>
<div class="a" style="left:2px;top:883.5px;width:910px;height:1.5px;background:#1e1e1e;"></div>
<div class="a" style="left:913px;top:860px;width:663px;height:25px;background:#333333;"></div>
<div class="a" style="left:913px;top:883.5px;width:663px;height:1.5px;background:#222222;"></div>
<div class="a" style="left:913px;top:860px;width:9px;height:24px;background:#262626;"></div>
<div class="a" style="left:1576px;top:860px;width:21px;height:25px;background:#232323;"></div>
<div class="a" style="left:2px;top:885px;width:910px;height:24px;background:#303030;"></div>
<div class="a" style="left:2px;top:908.5px;width:910px;height:1.5px;background:#1e1e1e;"></div>
<div class="a" style="left:913px;top:885px;width:663px;height:25px;background:#333333;"></div>
<div class="a" style="left:913px;top:908.5px;width:663px;height:1.5px;background:#222222;"></div>
<div class="a" style="left:913px;top:885px;width:9px;height:24px;background:#303030;"></div>
<div class="a" style="left:1576px;top:885px;width:21px;height:25px;background:#232323;"></div>
<div class="a" style="left:2px;top:910px;width:910px;height:24px;background:#262626;"></div>
<div class="a" style="left:2px;top:933.5px;width:910px;height:1.5px;background:#1e1e1e;"></div>
<div class="a" style="left:913px;top:910px;width:663px;height:25px;background:#333333;"></div>
<div class="a" style="left:913px;top:933.5px;width:663px;height:1.5px;background:#222222;"></div>
<div class="a" style="left:913px;top:910px;width:9px;height:24px;background:#262626;"></div>
<div class="a" style="left:1576px;top:910px;width:21px;height:25px;background:#232323;"></div>
<div class="a" style="left:2px;top:935px;width:910px;height:72px;background:#232323;"></div>
<div class="a" style="left:913px;top:935px;width:663px;height:72px;background:#333333;"></div>
<div class="a" style="left:922px;top:735px;width:654px;height:1px;background:#3a3a3a;"></div>
<div class="a" style="left:922px;top:760px;width:654px;height:1px;background:#3a3a3a;"></div>
<div class="a" style="left:922px;top:785px;width:654px;height:1px;background:#3a3a3a;"></div>
<div class="a" style="left:922px;top:810px;width:654px;height:1px;background:#3a3a3a;"></div>
<div class="a" style="left:922px;top:835px;width:654px;height:1px;background:#3a3a3a;"></div>
<div class="a" style="left:922px;top:860px;width:654px;height:1px;background:#3a3a3a;"></div>
<div class="a" style="left:922px;top:885px;width:654px;height:1px;background:#3a3a3a;"></div>
<div class="a" style="left:922px;top:910px;width:654px;height:1px;background:#3a3a3a;"></div>
<div class="a" style="left:922px;top:935px;width:654px;height:1px;background:#3a3a3a;"></div>
<div class="a" style="left:1576px;top:708px;width:21px;height:2px;background:#151515;"></div>
<div class="a" style="left:1576px;top:733px;width:21px;height:1.5px;background:#1c1c1c;"></div>
<div class="a" style="left:913px;top:935px;width:9px;height:72px;background:#262626;"></div>
<div class="a" style="left:2px;top:1007px;width:1045px;height:2px;background:#0c0c0c;"></div>
<div class="a" style="left:1047px;top:1007px;width:550px;height:2px;background:#1b1b1b;"></div>
<div class="a" style="left:7px;top:712px;width:16px;height:16px;background:#222222;"></div>
<svg class="a" style="left:8px;top:715px;" width="14" height="10" viewBox="0 0 14 10"><path d="M0.3 5 Q7 -2.5 13.7 5 Q7 12.5 0.3 5 Z" fill="#c0c0c0"/><circle cx="7" cy="5" r="2.9" fill="#1a1a1a"/><circle cx="7.8" cy="4.2" r="0.9" fill="#555"/></svg>
<div class="a" style="left:44.5px;top:712px;width:16px;height:16px;background:#222222;"></div>
<div class="a" style="left:63.5px;top:712px;width:16px;height:16px;background:#222222;"></div>
<svg class="a" style="left:95px;top:720px;" width="9" height="5" viewBox="0 0 9 5"><path d="M0.5 0.5 L4.5 4.5 L8.5 0.5" stroke="#a0a0a0" stroke-width="1.2" fill="none"/></svg>
<div class="a" style="left:108px;top:712px;width:19px;height:19px;background:#b53838;"></div>
<div class="t" style="left:135px;top:714px;font-size:15px;color:#d0d0d0;font-family:'Liberation Serif',serif;font-weight:bold;">1</div>
<div class="a" style="left:157px;top:711px;width:21px;height:20px;background:#fff;border:1px solid #111;box-sizing:border-box"></div>
<div class="t" style="left:187px;top:714px;font-size:15px;color:#d4d4d4;font-family:'Liberation Serif',serif;letter-spacing:1.3px">[空 1]</div>
<div class="a" style="left:373px;top:712px;width:17px;height:18px;background:#222222;"></div>
<svg class="a" style="left:374px;top:714px;" width="16" height="15" viewBox="0 0 16 15"><path d="M2.5 8 Q2.5 0.5 8 0.5 Q13.5 0.5 13.5 8 Z" fill="#a9a9a9"/><circle cx="5.8" cy="4.8" r="1.3" fill="#222222"/><circle cx="10.2" cy="4.8" r="1.3" fill="#222222"/><rect x="6.8" y="8" width="2.4" height="6" fill="#a9a9a9"/><path d="M0 11 H6.5 M9.5 11 H16" stroke="#a9a9a9" stroke-width="1.4"/></svg>
<div class="a" style="left:392px;top:712px;width:16px;height:18px;background:#222222;"></div>
<div class="a" style="left:410px;top:712px;width:17px;height:18px;background:#222222;"></div>
<svg class="a" style="left:411px;top:714px;" width="15" height="14" viewBox="0 0 15 14"><path d="M1 13 L14 1" stroke="#c0c0c0" stroke-width="1.6"/></svg>
<div class="a" style="left:467px;top:712px;width:16px;height:18px;background:#222222;"></div>
<div class="a" style="left:486px;top:712px;width:16px;height:18px;background:#222222;"></div>
<svg class="a" style="left:505px;top:713px;" width="16" height="16" viewBox="0 0 16 16"><path d="M8 0.8 L15 4.3 V11.7 L8 15.2 L1 11.7 V4.3 Z M1 4.3 L8 7.8 L15 4.3 M8 7.8 V15.2" stroke="#b8b8b8" stroke-width="1.4" fill="none"/></svg>
<div class="a" style="left:543px;top:711px;width:86px;height:21px;background:#1d1d1d;"></div>
<div class="t" style="left:552px;top:713px;font-size:16px;color:#d0d0d0;font-family:'Liberation Sans',sans-serif;">正常</div>
<svg class="a" style="left:614px;top:719px;" width="10" height="6" viewBox="0 0 10 6"><path d="M0.5 0.5 L5.0 5.5 L9.5 0.5" stroke="#c0c0c0" stroke-width="1.3" fill="none"/></svg>
<div class="a" style="left:636px;top:712px;width:16px;height:16px;background:#1d1d1d;"></div>
<svg class="a" style="left:752px;top:714px;" width="17" height="16" viewBox="0 0 17 16"><path d="M8.08 8.39 L8.01 8.38 L7.94 8.36 L7.87 8.33 L7.80 8.29 L7.74 8.24 L7.68 8.19 L7.62 8.12 L7.57 8.05 L7.53 7.98 L7.49 7.89 L7.47 7.80 L7.45 7.70 L7.45 7.60 L7.46 7.50 L7.47 7.40 L7.50 7.29 L7.55 7.18 L7.60 7.08 L7.67 6.98 L7.76 6.88 L7.85 6.79 L7.96 6.71 L8.07 6.63 L8.20 6.56 L8.34 6.51 L8.49 6.46 L8.64 6.43 L8.80 6.41 L8.97 6.40 L9.14 6.41 L9.31 6.44 L9.48 6.48 L9.65 6.54 L9.81 6.61 L9.97 6.70 L10.13 6.80 L10.27 6.92 L10.41 7.05 L10.53 7.20 L10.64 7.36 L10.73 7.53 L10.81 7.71 L10.87 7.91 L10.91 8.10 L10.93 8.31 L10.93 8.52 L10.91 8.73 L10.87 8.94 L10.80 9.15 L10.71 9.36 L10.60 9.56 L10.47 9.76 L10.32 9.94 L10.14 10.12 L9.95 10.28 L9.74 10.42 L9.51 10.55 L9.27 10.66 L9.01 10.75 L8.74 10.82 L8.46 10.87 L8.18 10.89 L7.89 10.89 L7.60 10.86 L7.30 10.81 L7.01 10.73 L6.73 10.63 L6.46 10.51 L6.19 10.35 L5.94 10.18 L5.70 9.98 L5.49 9.76 L5.29 9.52 L5.11 9.26 L4.97 8.99 L4.84 8.70 L4.75 8.39 L4.68 8.08 L4.65 7.76 L4.65 7.44 L4.68 7.11 L4.74 6.79 L4.84 6.46 L4.97 6.15 L5.13 5.84 L5.33 5.54 L5.55 5.26 L5.80 5.00 L6.09 4.76 L6.39 4.54 L6.72 4.34 L7.08 4.17 L7.45 4.04 L7.83 3.93 L8.23 3.85 L8.64 3.81 L9.06 3.80 L9.48 3.82 L9.89 3.89 L10.31 3.98 L10.71 4.12 L11.11 4.28 L11.49 4.49 L11.85 4.72 L12.19 4.99 L12.50 5.28 L12.79 5.61 L13.04 5.95 L13.26 6.33 L13.44 6.72 L13.59 7.13 L13.70 7.55 L13.76 7.98 L13.78 8.42 L13.76 8.86 L13.69 9.31 L13.58 9.75 L13.43 10.18 L13.23 10.60 L12.99 11.00 L12.71 11.39 L12.39 11.75 L12.03 12.09 L11.64 12.39 L11.21 12.67 L10.76 12.91 L10.28 13.12 L9.78 13.28 L9.27 13.40 L8.73 13.48 L8.19 13.52 L7.65 13.51 L7.10 13.45 L6.56 13.35 L6.03 13.20 L5.51 13.01 L5.01 12.77 L4.53 12.49 L4.07 12.17 L3.65 11.81 L3.27 11.41 L2.92 10.98 L2.61 10.52 L2.35 10.04 L2.13 9.53 L1.97 9.00 L1.85 8.46 L1.80 7.90 L1.79 7.34 L1.84 6.78 L1.95 6.22 L2.11 5.67 L2.33 5.14 L2.60 4.62 L2.92 4.12 L3.30 3.64 L3.72 3.20 L4.18 2.79 L4.69 2.43 L5.23 2.10" stroke="#b8b8b8" stroke-width="1.3" fill="none"/></svg>
<div class="a" style="left:776px;top:711px;width:111px;height:21px;background:#1d1d1d;"></div>
<div class="t" style="left:785px;top:713px;font-size:14.5px;color:#d0d0d0;font-family:'Liberation Sans',sans-serif;">无</div>
<svg class="a" style="left:872px;top:719px;" width="10" height="6" viewBox="0 0 10 6"><path d="M0.5 0.5 L5.0 5.5 L9.5 0.5" stroke="#c0c0c0" stroke-width="1.3" fill="none"/></svg>
<svg class="a" style="left:11px;top:742px;" width="8" height="11" viewBox="0 0 8 11"><path d="M8 0 V11 L0 5.5 Z" fill="#b0b0b0"/></svg>
<div class="a" style="left:26px;top:737px;width:16px;height:20px;background:#232323;border:1px solid #2e2e2e;box-sizing:border-box"></div>
<svg class="a" style="left:28px;top:741px;" width="12" height="12" viewBox="0 0 12 12"><path d="M6 0 L12 6 L6 12 L0 6 Z" fill="#2d8ceb"/></svg>
<svg class="a" style="left:50px;top:742px;" width="8" height="11" viewBox="0 0 8 11"><path d="M0 0 V11 L8 5.5 Z" fill="#555"/></svg>
<div class="a" style="left:162px;top:737px;width:20px;height:22px;background:#1e1e1e;"></div>
<svg class="a" style="left:164px;top:739px;" width="16" height="18" viewBox="0 0 16 18"><circle cx="8" cy="10.5" r="6.5" stroke="#2d8ceb" stroke-width="1.6" fill="none"/><path d="M5.5 1 H10.5 M8 1 V4" stroke="#2d8ceb" stroke-width="1.6"/><path d="M8 10.5 L11 7" stroke="#2d8ceb" stroke-width="1.5"/></svg>
<svg class="a" style="left:187px;top:741px;" width="16" height="15" viewBox="0 0 16 15"><path d="M1 0 V14 H16" stroke="#888" stroke-width="1.6" fill="none"/><path d="M3 5 L6 12 L9 7 L12 10 L15 4" stroke="#b0b0b0" stroke-width="1.3" fill="none"/></svg>
<div class="t" style="left:211px;top:740px;font-size:14px;color:#d0d0d0;font-family:'Liberation Sans',sans-serif;">位置</div>
<div class="a" style="left:146.5px;top:747.5px;width:1.5px;height:1.5px;background:#444;"></div>
<div class="t" style="left:373px;top:741px;font-size:11.9px;color:#3a8ee6;font-family:'Liberation Mono',monospace;">0.0,360.0,700.0</div>
<svg class="a" style="left:770px;top:738px;" width="17" height="16" viewBox="0 0 17 16"><path d="M8.08 8.39 L8.01 8.38 L7.94 8.36 L7.87 8.33 L7.80 8.29 L7.74 8.24 L7.68 8.19 L7.62 8.12 L7.57 8.05 L7.53 7.98 L7.49 7.89 L7.47 7.80 L7.45 7.70 L7.45 7.60 L7.46 7.50 L7.47 7.40 L7.50 7.29 L7.55 7.18 L7.60 7.08 L7.67 6.98 L7.76 6.88 L7.85 6.79 L7.96 6.71 L8.07 6.63 L8.20 6.56 L8.34 6.51 L8.49 6.46 L8.64 6.43 L8.80 6.41 L8.97 6.40 L9.14 6.41 L9.31 6.44 L9.48 6.48 L9.65 6.54 L9.81 6.61 L9.97 6.70 L10.13 6.80 L10.27 6.92 L10.41 7.05 L10.53 7.20 L10.64 7.36 L10.73 7.53 L10.81 7.71 L10.87 7.91 L10.91 8.10 L10.93 8.31 L10.93 8.52 L10.91 8.73 L10.87 8.94 L10.80 9.15 L10.71 9.36 L10.60 9.56 L10.47 9.76 L10.32 9.94 L10.14 10.12 L9.95 10.28 L9.74 10.42 L9.51 10.55 L9.27 10.66 L9.01 10.75 L8.74 10.82 L8.46 10.87 L8.18 10.89 L7.89 10.89 L7.60 10.86 L7.30 10.81 L7.01 10.73 L6.73 10.63 L6.46 10.51 L6.19 10.35 L5.94 10.18 L5.70 9.98 L5.49 9.76 L5.29 9.52 L5.11 9.26 L4.97 8.99 L4.84 8.70 L4.75 8.39 L4.68 8.08 L4.65 7.76 L4.65 7.44 L4.68 7.11 L4.74 6.79 L4.84 6.46 L4.97 6.15 L5.13 5.84 L5.33 5.54 L5.55 5.26 L5.80 5.00 L6.09 4.76 L6.39 4.54 L6.72 4.34 L7.08 4.17 L7.45 4.04 L7.83 3.93 L8.23 3.85 L8.64 3.81 L9.06 3.80 L9.48 3.82 L9.89 3.89 L10.31 3.98 L10.71 4.12 L11.11 4.28 L11.49 4.49 L11.85 4.72 L12.19 4.99 L12.50 5.28 L12.79 5.61 L13.04 5.95 L13.26 6.33 L13.44 6.72 L13.59 7.13 L13.70 7.55 L13.76 7.98 L13.78 8.42 L13.76 8.86 L13.69 9.31 L13.58 9.75 L13.43 10.18 L13.23 10.60 L12.99 11.00 L12.71 11.39 L12.39 11.75 L12.03 12.09 L11.64 12.39 L11.21 12.67 L10.76 12.91 L10.28 13.12 L9.78 13.28 L9.27 13.40 L8.73 13.48 L8.19 13.52 L7.65 13.51 L7.10 13.45 L6.56 13.35 L6.03 13.20 L5.51 13.01 L5.01 12.77 L4.53 12.49 L4.07 12.17 L3.65 11.81 L3.27 11.41 L2.92 10.98 L2.61 10.52 L2.35 10.04 L2.13 9.53 L1.97 9.00 L1.85 8.46 L1.80 7.90 L1.79 7.34 L1.84 6.78 L1.95 6.22 L2.11 5.67 L2.33 5.14 L2.60 4.62 L2.92 4.12 L3.30 3.64 L3.72 3.20 L4.18 2.79 L4.69 2.43 L5.23 2.10" stroke="#b8b8b8" stroke-width="1.3" fill="none"/></svg>
<div class="a" style="left:7px;top:762px;width:16px;height:16px;background:#3d3d3d;"></div>
<svg class="a" style="left:8px;top:765px;" width="14" height="10" viewBox="0 0 14 10"><path d="M0.3 5 Q7 -2.5 13.7 5 Q7 12.5 0.3 5 Z" fill="#c0c0c0"/><circle cx="7" cy="5" r="2.9" fill="#1a1a1a"/><circle cx="7.8" cy="4.2" r="0.9" fill="#555"/></svg>
<div class="a" style="left:44.5px;top:762px;width:16px;height:16px;background:#3d3d3d;"></div>
<div class="a" style="left:63.5px;top:762px;width:16px;height:16px;background:#3d3d3d;"></div>
<svg class="a" style="left:95px;top:769px;" width="5" height="9" viewBox="0 0 5 9"><path d="M0.5 0.5 L4.5 4.5 L0.5 8.5" stroke="#a0a0a0" stroke-width="1.2" fill="none"/></svg>
<div class="a" style="left:108px;top:762px;width:19px;height:19px;background:#e6bcc8;"></div>
<div class="t" style="left:135px;top:764px;font-size:15px;color:#d0d0d0;font-family:'Liberation Serif',serif;font-weight:bold;">2</div>
<svg class="a" style="left:160px;top:766px;" width="17" height="12" viewBox="0 0 17 12"><rect x="0" y="0.5" width="10" height="11" rx="1.5" fill="#a9a9a9"/><path d="M9 4 L17 0 V12 L9 8 Z" fill="#a9a9a9"/></svg>
<div class="a" style="left:181px;top:760px;width:185px;height:24px;background:#a3a3a3;"></div>
<div class="t" style="left:185px;top:766px;font-size:14.5px;color:#111;font-family:'Liberation Serif',serif;font-weight:bold;letter-spacing:1.4px">摄像机 1</div>
<div class="a" style="left:373px;top:762px;width:17px;height:18px;background:#3d3d3d;"></div>
<svg class="a" style="left:374px;top:764px;" width="16" height="15" viewBox="0 0 16 15"><path d="M2.5 8 Q2.5 0.5 8 0.5 Q13.5 0.5 13.5 8 Z" fill="#a9a9a9"/><circle cx="5.8" cy="4.8" r="1.3" fill="#3d3d3d"/><circle cx="10.2" cy="4.8" r="1.3" fill="#3d3d3d"/><rect x="6.8" y="8" width="2.4" height="6" fill="#a9a9a9"/><path d="M0 11 H6.5 M9.5 11 H16" stroke="#a9a9a9" stroke-width="1.4"/></svg>
<svg class="a" style="left:752px;top:764px;" width="17" height="16" viewBox="0 0 17 16"><path d="M8.08 8.39 L8.01 8.38 L7.94 8.36 L7.87 8.33 L7.80 8.29 L7.74 8.24 L7.68 8.19 L7.62 8.12 L7.57 8.05 L7.53 7.98 L7.49 7.89 L7.47 7.80 L7.45 7.70 L7.45 7.60 L7.46 7.50 L7.47 7.40 L7.50 7.29 L7.55 7.18 L7.60 7.08 L7.67 6.98 L7.76 6.88 L7.85 6.79 L7.96 6.71 L8.07 6.63 L8.20 6.56 L8.34 6.51 L8.49 6.46 L8.64 6.43 L8.80 6.41 L8.97 6.40 L9.14 6.41 L9.31 6.44 L9.48 6.48 L9.65 6.54 L9.81 6.61 L9.97 6.70 L10.13 6.80 L10.27 6.92 L10.41 7.05 L10.53 7.20 L10.64 7.36 L10.73 7.53 L10.81 7.71 L10.87 7.91 L10.91 8.10 L10.93 8.31 L10.93 8.52 L10.91 8.73 L10.87 8.94 L10.80 9.15 L10.71 9.36 L10.60 9.56 L10.47 9.76 L10.32 9.94 L10.14 10.12 L9.95 10.28 L9.74 10.42 L9.51 10.55 L9.27 10.66 L9.01 10.75 L8.74 10.82 L8.46 10.87 L8.18 10.89 L7.89 10.89 L7.60 10.86 L7.30 10.81 L7.01 10.73 L6.73 10.63 L6.46 10.51 L6.19 10.35 L5.94 10.18 L5.70 9.98 L5.49 9.76 L5.29 9.52 L5.11 9.26 L4.97 8.99 L4.84 8.70 L4.75 8.39 L4.68 8.08 L4.65 7.76 L4.65 7.44 L4.68 7.11 L4.74 6.79 L4.84 6.46 L4.97 6.15 L5.13 5.84 L5.33 5.54 L5.55 5.26 L5.80 5.00 L6.09 4.76 L6.39 4.54 L6.72 4.34 L7.08 4.17 L7.45 4.04 L7.83 3.93 L8.23 3.85 L8.64 3.81 L9.06 3.80 L9.48 3.82 L9.89 3.89 L10.31 3.98 L10.71 4.12 L11.11 4.28 L11.49 4.49 L11.85 4.72 L12.19 4.99 L12.50 5.28 L12.79 5.61 L13.04 5.95 L13.26 6.33 L13.44 6.72 L13.59 7.13 L13.70 7.55 L13.76 7.98 L13.78 8.42 L13.76 8.86 L13.69 9.31 L13.58 9.75 L13.43 10.18 L13.23 10.60 L12.99 11.00 L12.71 11.39 L12.39 11.75 L12.03 12.09 L11.64 12.39 L11.21 12.67 L10.76 12.91 L10.28 13.12 L9.78 13.28 L9.27 13.40 L8.73 13.48 L8.19 13.52 L7.65 13.51 L7.10 13.45 L6.56 13.35 L6.03 13.20 L5.51 13.01 L5.01 12.77 L4.53 12.49 L4.07 12.17 L3.65 11.81 L3.27 11.41 L2.92 10.98 L2.61 10.52 L2.35 10.04 L2.13 9.53 L1.97 9.00 L1.85 8.46 L1.80 7.90 L1.79 7.34 L1.84 6.78 L1.95 6.22 L2.11 5.67 L2.33 5.14 L2.60 4.62 L2.92 4.12 L3.30 3.64 L3.72 3.20 L4.18 2.79 L4.69 2.43 L5.23 2.10" stroke="#b8b8b8" stroke-width="1.3" fill="none"/></svg>
<div class="a" style="left:776px;top:761px;width:111px;height:21px;background:#1d1d1d;"></div>
<div class="t" style="left:784px;top:765px;font-size:15px;color:#d0d0d0;font-family:'Liberation Sans',sans-serif;transform:scaleX(0.87);transform-origin:0 0;">1. 空 1</div>
<svg class="a" style="left:872px;top:769px;" width="10" height="6" viewBox="0 0 10 6"><path d="M0.5 0.5 L5.0 5.5 L9.5 0.5" stroke="#c0c0c0" stroke-width="1.3" fill="none"/></svg>
<div class="a" style="left:7px;top:787px;width:16px;height:16px;background:#222222;"></div>
<svg class="a" style="left:8px;top:790px;" width="14" height="10" viewBox="0 0 14 10"><path d="M0.3 5 Q7 -2.5 13.7 5 Q7 12.5 0.3 5 Z" fill="#c0c0c0"/><circle cx="7" cy="5" r="2.9" fill="#1a1a1a"/><circle cx="7.8" cy="4.2" r="0.9" fill="#555"/></svg>
<div class="a" style="left:44.5px;top:787px;width:16px;height:16px;background:#222222;"></div>
<div class="a" style="left:63.5px;top:787px;width:16px;height:16px;background:#222222;"></div>
<svg class="a" style="left:95px;top:795px;" width="9" height="5" viewBox="0 0 9 5"><path d="M0.5 0.5 L4.5 4.5 L8.5 0.5" stroke="#a0a0a0" stroke-width="1.2" fill="none"/></svg>
<div class="a" style="left:108px;top:787px;width:19px;height:19px;background:#6b7fe0;"></div>
<div class="t" style="left:135px;top:789px;font-size:15px;color:#d0d0d0;font-family:'Liberation Serif',serif;font-weight:bold;">3</div>
<svg class="a" style="left:160px;top:789px;" width="16" height="16" viewBox="0 0 16 16"><path d="M8 0.5 L10.2 5.5 L15.5 6 L11.5 9.6 L12.7 15 L8 12.2 L3.3 15 L4.5 9.6 L0.5 6 L5.8 5.5 Z" fill="#b0b0b0"/></svg>
<div class="t" style="left:185px;top:791px;font-size:14.5px;color:#d4d4d4;font-family:'Liberation Serif',serif;font-weight:bold;letter-spacing:1.4px">形状图层 3</div>
<div class="a" style="left:373px;top:787px;width:17px;height:18px;background:#222222;"></div>
<svg class="a" style="left:374px;top:789px;" width="16" height="15" viewBox="0 0 16 15"><path d="M2.5 8 Q2.5 0.5 8 0.5 Q13.5 0.5 13.5 8 Z" fill="#a9a9a9"/><circle cx="5.8" cy="4.8" r="1.3" fill="#222222"/><circle cx="10.2" cy="4.8" r="1.3" fill="#222222"/><rect x="6.8" y="8" width="2.4" height="6" fill="#a9a9a9"/><path d="M0 11 H6.5 M9.5 11 H16" stroke="#a9a9a9" stroke-width="1.4"/></svg>
<div class="a" style="left:392px;top:787px;width:16px;height:18px;background:#222222;"></div>
<svg class="a" style="left:393px;top:789px;" width="14" height="14" viewBox="0 0 14 14"><circle cx="7" cy="7" r="3" stroke="#7a7a7a" stroke-width="1.3" fill="none"/><path d="M7 0 V3 M7 11 V14 M0 7 H3 M11 7 H14 M2 2 L4 4 M10 10 L12 12 M12 2 L10 4 M4 10 L2 12" stroke="#7a7a7a" stroke-width="1.2"/></svg>
<div class="a" style="left:410px;top:787px;width:17px;height:18px;background:#222222;"></div>
<svg class="a" style="left:411px;top:789px;" width="15" height="14" viewBox="0 0 15 14"><path d="M1 13 L14 1" stroke="#c0c0c0" stroke-width="1.6"/></svg>
<div class="a" style="left:467px;top:787px;width:16px;height:18px;background:#222222;"></div>
<div class="a" style="left:486px;top:787px;width:16px;height:18px;background:#222222;"></div>
<svg class="a" style="left:505px;top:788px;" width="16" height="16" viewBox="0 0 16 16"><path d="M8 0.8 L15 4.3 V11.7 L8 15.2 L1 11.7 V4.3 Z M1 4.3 L8 7.8 L15 4.3 M8 7.8 V15.2" stroke="#b8b8b8" stroke-width="1.4" fill="none"/></svg>
<div class="a" style="left:543px;top:786px;width:86px;height:21px;background:#1d1d1d;"></div>
<div class="t" style="left:552px;top:788px;font-size:16px;color:#d0d0d0;font-family:'Liberation Sans',sans-serif;">正常</div>
<svg class="a" style="left:614px;top:794px;" width="10" height="6" viewBox="0 0 10 6"><path d="M0.5 0.5 L5.0 5.5 L9.5 0.5" stroke="#c0c0c0" stroke-width="1.3" fill="none"/></svg>
<div class="a" style="left:636px;top:787px;width:16px;height:16px;background:#1d1d1d;"></div>
<svg class="a" style="left:752px;top:789px;" width="17" height="16" viewBox="0 0 17 16"><path d="M8.08 8.39 L8.01 8.38 L7.94 8.36 L7.87 8.33 L7.80 8.29 L7.74 8.24 L7.68 8.19 L7.62 8.12 L7.57 8.05 L7.53 7.98 L7.49 7.89 L7.47 7.80 L7.45 7.70 L7.45 7.60 L7.46 7.50 L7.47 7.40 L7.50 7.29 L7.55 7.18 L7.60 7.08 L7.67 6.98 L7.76 6.88 L7.85 6.79 L7.96 6.71 L8.07 6.63 L8.20 6.56 L8.34 6.51 L8.49 6.46 L8.64 6.43 L8.80 6.41 L8.97 6.40 L9.14 6.41 L9.31 6.44 L9.48 6.48 L9.65 6.54 L9.81 6.61 L9.97 6.70 L10.13 6.80 L10.27 6.92 L10.41 7.05 L10.53 7.20 L10.64 7.36 L10.73 7.53 L10.81 7.71 L10.87 7.91 L10.91 8.10 L10.93 8.31 L10.93 8.52 L10.91 8.73 L10.87 8.94 L10.80 9.15 L10.71 9.36 L10.60 9.56 L10.47 9.76 L10.32 9.94 L10.14 10.12 L9.95 10.28 L9.74 10.42 L9.51 10.55 L9.27 10.66 L9.01 10.75 L8.74 10.82 L8.46 10.87 L8.18 10.89 L7.89 10.89 L7.60 10.86 L7.30 10.81 L7.01 10.73 L6.73 10.63 L6.46 10.51 L6.19 10.35 L5.94 10.18 L5.70 9.98 L5.49 9.76 L5.29 9.52 L5.11 9.26 L4.97 8.99 L4.84 8.70 L4.75 8.39 L4.68 8.08 L4.65 7.76 L4.65 7.44 L4.68 7.11 L4.74 6.79 L4.84 6.46 L4.97 6.15 L5.13 5.84 L5.33 5.54 L5.55 5.26 L5.80 5.00 L6.09 4.76 L6.39 4.54 L6.72 4.34 L7.08 4.17 L7.45 4.04 L7.83 3.93 L8.23 3.85 L8.64 3.81 L9.06 3.80 L9.48 3.82 L9.89 3.89 L10.31 3.98 L10.71 4.12 L11.11 4.28 L11.49 4.49 L11.85 4.72 L12.19 4.99 L12.50 5.28 L12.79 5.61 L13.04 5.95 L13.26 6.33 L13.44 6.72 L13.59 7.13 L13.70 7.55 L13.76 7.98 L13.78 8.42 L13.76 8.86 L13.69 9.31 L13.58 9.75 L13.43 10.18 L13.23 10.60 L12.99 11.00 L12.71 11.39 L12.39 11.75 L12.03 12.09 L11.64 12.39 L11.21 12.67 L10.76 12.91 L10.28 13.12 L9.78 13.28 L9.27 13.40 L8.73 13.48 L8.19 13.52 L7.65 13.51 L7.10 13.45 L6.56 13.35 L6.03 13.20 L5.51 13.01 L5.01 12.77 L4.53 12.49 L4.07 12.17 L3.65 11.81 L3.27 11.41 L2.92 10.98 L2.61 10.52 L2.35 10.04 L2.13 9.53 L1.97 9.00 L1.85 8.46 L1.80 7.90 L1.79 7.34 L1.84 6.78 L1.95 6.22 L2.11 5.67 L2.33 5.14 L2.60 4.62 L2.92 4.12 L3.30 3.64 L3.72 3.20 L4.18 2.79 L4.69 2.43 L5.23 2.10" stroke="#b8b8b8" stroke-width="1.3" fill="none"/></svg>
<div class="a" style="left:776px;top:786px;width:111px;height:21px;background:#1d1d1d;"></div>
<div class="t" style="left:785px;top:788px;font-size:14.5px;color:#d0d0d0;font-family:'Liberation Sans',sans-serif;">无</div>
<svg class="a" style="left:872px;top:794px;" width="10" height="6" viewBox="0 0 10 6"><path d="M0.5 0.5 L5.0 5.5 L9.5 0.5" stroke="#c0c0c0" stroke-width="1.3" fill="none"/></svg>
<svg class="a" style="left:165px;top:814px;" width="16" height="18" viewBox="0 0 16 18"><circle cx="8" cy="10.5" r="6.5" stroke="#b8b8b8" stroke-width="1.6" fill="none"/><path d="M5.5 1 H10.5 M8 1 V4" stroke="#b8b8b8" stroke-width="1.6"/></svg>
<div class="t" style="left:187px;top:815px;font-size:14px;color:#d0d0d0;font-family:'Liberation Sans',sans-serif;">位置</div>
<div class="a" style="left:146.5px;top:822.5px;width:1.5px;height:1.5px;background:#444;"></div>
<div class="t" style="left:373px;top:816px;font-size:11.9px;color:#3a8ee6;font-family:'Liberation Mono',monospace;">1280.0,360.0,700.0</div>
<svg class="a" style="left:770px;top:813px;" width="17" height="16" viewBox="0 0 17 16"><path d="M8.08 8.39 L8.01 8.38 L7.94 8.36 L7.87 8.33 L7.80 8.29 L7.74 8.24 L7.68 8.19 L7.62 8.12 L7.57 8.05 L7.53 7.98 L7.49 7.89 L7.47 7.80 L7.45 7.70 L7.45 7.60 L7.46 7.50 L7.47 7.40 L7.50 7.29 L7.55 7.18 L7.60 7.08 L7.67 6.98 L7.76 6.88 L7.85 6.79 L7.96 6.71 L8.07 6.63 L8.20 6.56 L8.34 6.51 L8.49 6.46 L8.64 6.43 L8.80 6.41 L8.97 6.40 L9.14 6.41 L9.31 6.44 L9.48 6.48 L9.65 6.54 L9.81 6.61 L9.97 6.70 L10.13 6.80 L10.27 6.92 L10.41 7.05 L10.53 7.20 L10.64 7.36 L10.73 7.53 L10.81 7.71 L10.87 7.91 L10.91 8.10 L10.93 8.31 L10.93 8.52 L10.91 8.73 L10.87 8.94 L10.80 9.15 L10.71 9.36 L10.60 9.56 L10.47 9.76 L10.32 9.94 L10.14 10.12 L9.95 10.28 L9.74 10.42 L9.51 10.55 L9.27 10.66 L9.01 10.75 L8.74 10.82 L8.46 10.87 L8.18 10.89 L7.89 10.89 L7.60 10.86 L7.30 10.81 L7.01 10.73 L6.73 10.63 L6.46 10.51 L6.19 10.35 L5.94 10.18 L5.70 9.98 L5.49 9.76 L5.29 9.52 L5.11 9.26 L4.97 8.99 L4.84 8.70 L4.75 8.39 L4.68 8.08 L4.65 7.76 L4.65 7.44 L4.68 7.11 L4.74 6.79 L4.84 6.46 L4.97 6.15 L5.13 5.84 L5.33 5.54 L5.55 5.26 L5.80 5.00 L6.09 4.76 L6.39 4.54 L6.72 4.34 L7.08 4.17 L7.45 4.04 L7.83 3.93 L8.23 3.85 L8.64 3.81 L9.06 3.80 L9.48 3.82 L9.89 3.89 L10.31 3.98 L10.71 4.12 L11.11 4.28 L11.49 4.49 L11.85 4.72 L12.19 4.99 L12.50 5.28 L12.79 5.61 L13.04 5.95 L13.26 6.33 L13.44 6.72 L13.59 7.13 L13.70 7.55 L13.76 7.98 L13.78 8.42 L13.76 8.86 L13.69 9.31 L13.58 9.75 L13.43 10.18 L13.23 10.60 L12.99 11.00 L12.71 11.39 L12.39 11.75 L12.03 12.09 L11.64 12.39 L11.21 12.67 L10.76 12.91 L10.28 13.12 L9.78 13.28 L9.27 13.40 L8.73 13.48 L8.19 13.52 L7.65 13.51 L7.10 13.45 L6.56 13.35 L6.03 13.20 L5.51 13.01 L5.01 12.77 L4.53 12.49 L4.07 12.17 L3.65 11.81 L3.27 11.41 L2.92 10.98 L2.61 10.52 L2.35 10.04 L2.13 9.53 L1.97 9.00 L1.85 8.46 L1.80 7.90 L1.79 7.34 L1.84 6.78 L1.95 6.22 L2.11 5.67 L2.33 5.14 L2.60 4.62 L2.92 4.12 L3.30 3.64 L3.72 3.20 L4.18 2.79 L4.69 2.43 L5.23 2.10" stroke="#b8b8b8" stroke-width="1.3" fill="none"/></svg>
<div class="a" style="left:7px;top:837px;width:16px;height:16px;background:#222222;"></div>
<svg class="a" style="left:8px;top:840px;" width="14" height="10" viewBox="0 0 14 10"><path d="M0.3 5 Q7 -2.5 13.7 5 Q7 12.5 0.3 5 Z" fill="#c0c0c0"/><circle cx="7" cy="5" r="2.9" fill="#1a1a1a"/><circle cx="7.8" cy="4.2" r="0.9" fill="#555"/></svg>
<div class="a" style="left:44.5px;top:837px;width:16px;height:16px;background:#222222;"></div>
<div class="a" style="left:63.5px;top:837px;width:16px;height:16px;background:#222222;"></div>
<svg class="a" style="left:95px;top:845px;" width="9" height="5" viewBox="0 0 9 5"><path d="M0.5 0.5 L4.5 4.5 L8.5 0.5" stroke="#a0a0a0" stroke-width="1.2" fill="none"/></svg>
<div class="a" style="left:108px;top:837px;width:19px;height:19px;background:#6b7fe0;"></div>
<div class="t" style="left:135px;top:839px;font-size:15px;color:#d0d0d0;font-family:'Liberation Serif',serif;font-weight:bold;">4</div>
<svg class="a" style="left:160px;top:839px;" width="16" height="16" viewBox="0 0 16 16"><path d="M8 0.5 L10.2 5.5 L15.5 6 L11.5 9.6 L12.7 15 L8 12.2 L3.3 15 L4.5 9.6 L0.5 6 L5.8 5.5 Z" fill="#b0b0b0"/></svg>
<div class="t" style="left:185px;top:841px;font-size:14.5px;color:#d4d4d4;font-family:'Liberation Serif',serif;font-weight:bold;letter-spacing:1.4px">形状图层 2</div>
<div class="a" style="left:373px;top:837px;width:17px;height:18px;background:#222222;"></div>
<svg class="a" style="left:374px;top:839px;" width="16" height="15" viewBox="0 0 16 15"><path d="M2.5 8 Q2.5 0.5 8 0.5 Q13.5 0.5 13.5 8 Z" fill="#a9a9a9"/><circle cx="5.8" cy="4.8" r="1.3" fill="#222222"/><circle cx="10.2" cy="4.8" r="1.3" fill="#222222"/><rect x="6.8" y="8" width="2.4" height="6" fill="#a9a9a9"/><path d="M0 11 H6.5 M9.5 11 H16" stroke="#a9a9a9" stroke-width="1.4"/></svg>
<div class="a" style="left:392px;top:837px;width:16px;height:18px;background:#222222;"></div>
<svg class="a" style="left:393px;top:839px;" width="14" height="14" viewBox="0 0 14 14"><circle cx="7" cy="7" r="3" stroke="#7a7a7a" stroke-width="1.3" fill="none"/><path d="M7 0 V3 M7 11 V14 M0 7 H3 M11 7 H14 M2 2 L4 4 M10 10 L12 12 M12 2 L10 4 M4 10 L2 12" stroke="#7a7a7a" stroke-width="1.2"/></svg>
<div class="a" style="left:410px;top:837px;width:17px;height:18px;background:#222222;"></div>
<svg class="a" style="left:411px;top:839px;" width="15" height="14" viewBox="0 0 15 14"><path d="M1 13 L14 1" stroke="#c0c0c0" stroke-width="1.6"/></svg>
<div class="a" style="left:467px;top:837px;width:16px;height:18px;background:#222222;"></div>
<div class="a" style="left:486px;top:837px;width:16px;height:18px;background:#222222;"></div>
<svg class="a" style="left:505px;top:838px;" width="16" height="16" viewBox="0 0 16 16"><path d="M8 0.8 L15 4.3 V11.7 L8 15.2 L1 11.7 V4.3 Z M1 4.3 L8 7.8 L15 4.3 M8 7.8 V15.2" stroke="#b8b8b8" stroke-width="1.4" fill="none"/></svg>
<div class="a" style="left:543px;top:836px;width:86px;height:21px;background:#1d1d1d;"></div>
<div class="t" style="left:552px;top:838px;font-size:16px;color:#d0d0d0;font-family:'Liberation Sans',sans-serif;">正常</div>
<svg class="a" style="left:614px;top:844px;" width="10" height="6" viewBox="0 0 10 6"><path d="M0.5 0.5 L5.0 5.5 L9.5 0.5" stroke="#c0c0c0" stroke-width="1.3" fill="none"/></svg>
<div class="a" style="left:636px;top:837px;width:16px;height:16px;background:#1d1d1d;"></div>
<div class="a" style="left:660px;top:836px;width:81px;height:21px;background:#1d1d1d;"></div>
<div class="t" style="left:669px;top:838px;font-size:14.5px;color:#d0d0d0;font-family:'Liberation Sans',sans-serif;">无</div>
<svg class="a" style="left:726px;top:844px;" width="10" height="6" viewBox="0 0 10 6"><path d="M0.5 0.5 L5.0 5.5 L9.5 0.5" stroke="#c0c0c0" stroke-width="1.3" fill="none"/></svg>
<svg class="a" style="left:752px;top:839px;" width="17" height="16" viewBox="0 0 17 16"><path d="M8.08 8.39 L8.01 8.38 L7.94 8.36 L7.87 8.33 L7.80 8.29 L7.74 8.24 L7.68 8.19 L7.62 8.12 L7.57 8.05 L7.53 7.98 L7.49 7.89 L7.47 7.80 L7.45 7.70 L7.45 7.60 L7.46 7.50 L7.47 7.40 L7.50 7.29 L7.55 7.18 L7.60 7.08 L7.67 6.98 L7.76 6.88 L7.85 6.79 L7.96 6.71 L8.07 6.63 L8.20 6.56 L8.34 6.51 L8.49 6.46 L8.64 6.43 L8.80 6.41 L8.97 6.40 L9.14 6.41 L9.31 6.44 L9.48 6.48 L9.65 6.54 L9.81 6.61 L9.97 6.70 L10.13 6.80 L10.27 6.92 L10.41 7.05 L10.53 7.20 L10.64 7.36 L10.73 7.53 L10.81 7.71 L10.87 7.91 L10.91 8.10 L10.93 8.31 L10.93 8.52 L10.91 8.73 L10.87 8.94 L10.80 9.15 L10.71 9.36 L10.60 9.56 L10.47 9.76 L10.32 9.94 L10.14 10.12 L9.95 10.28 L9.74 10.42 L9.51 10.55 L9.27 10.66 L9.01 10.75 L8.74 10.82 L8.46 10.87 L8.18 10.89 L7.89 10.89 L7.60 10.86 L7.30 10.81 L7.01 10.73 L6.73 10.63 L6.46 10.51 L6.19 10.35 L5.94 10.18 L5.70 9.98 L5.49 9.76 L5.29 9.52 L5.11 9.26 L4.97 8.99 L4.84 8.70 L4.75 8.39 L4.68 8.08 L4.65 7.76 L4.65 7.44 L4.68 7.11 L4.74 6.79 L4.84 6.46 L4.97 6.15 L5.13 5.84 L5.33 5.54 L5.55 5.26 L5.80 5.00 L6.09 4.76 L6.39 4.54 L6.72 4.34 L7.08 4.17 L7.45 4.04 L7.83 3.93 L8.23 3.85 L8.64 3.81 L9.06 3.80 L9.48 3.82 L9.89 3.89 L10.31 3.98 L10.71 4.12 L11.11 4.28 L11.49 4.49 L11.85 4.72 L12.19 4.99 L12.50 5.28 L12.79 5.61 L13.04 5.95 L13.26 6.33 L13.44 6.72 L13.59 7.13 L13.70 7.55 L13.76 7.98 L13.78 8.42 L13.76 8.86 L13.69 9.31 L13.58 9.75 L13.43 10.18 L13.23 10.60 L12.99 11.00 L12.71 11.39 L12.39 11.75 L12.03 12.09 L11.64 12.39 L11.21 12.67 L10.76 12.91 L10.28 13.12 L9.78 13.28 L9.27 13.40 L8.73 13.48 L8.19 13.52 L7.65 13.51 L7.10 13.45 L6.56 13.35 L6.03 13.20 L5.51 13.01 L5.01 12.77 L4.53 12.49 L4.07 12.17 L3.65 11.81 L3.27 11.41 L2.92 10.98 L2.61 10.52 L2.35 10.04 L2.13 9.53 L1.97 9.00 L1.85 8.46 L1.80 7.90 L1.79 7.34 L1.84 6.78 L1.95 6.22 L2.11 5.67 L2.33 5.14 L2.60 4.62 L2.92 4.12 L3.30 3.64 L3.72 3.20 L4.18 2.79 L4.69 2.43 L5.23 2.10" stroke="#b8b8b8" stroke-width="1.3" fill="none"/></svg>
<div class="a" style="left:776px;top:836px;width:111px;height:21px;background:#1d1d1d;"></div>
<div class="t" style="left:785px;top:838px;font-size:14.5px;color:#d0d0d0;font-family:'Liberation Sans',sans-serif;">无</div>
<svg class="a" style="left:872px;top:844px;" width="10" height="6" viewBox="0 0 10 6"><path d="M0.5 0.5 L5.0 5.5 L9.5 0.5" stroke="#c0c0c0" stroke-width="1.3" fill="none"/></svg>
<svg class="a" style="left:165px;top:864px;" width="16" height="18" viewBox="0 0 16 18"><circle cx="8" cy="10.5" r="6.5" stroke="#b8b8b8" stroke-width="1.6" fill="none"/><path d="M5.5 1 H10.5 M8 1 V4" stroke="#b8b8b8" stroke-width="1.6"/></svg>
<div class="t" style="left:187px;top:865px;font-size:14px;color:#d0d0d0;font-family:'Liberation Sans',sans-serif;">位置</div>
<div class="a" style="left:146.5px;top:872.5px;width:1.5px;height:1.5px;background:#444;"></div>
<div class="t" style="left:373px;top:866px;font-size:11.9px;color:#3a8ee6;font-family:'Liberation Mono',monospace;">640.0,360.0,0.0</div>
<svg class="a" style="left:770px;top:863px;" width="17" height="16" viewBox="0 0 17 16"><path d="M8.08 8.39 L8.01 8.38 L7.94 8.36 L7.87 8.33 L7.80 8.29 L7.74 8.24 L7.68 8.19 L7.62 8.12 L7.57 8.05 L7.53 7.98 L7.49 7.89 L7.47 7.80 L7.45 7.70 L7.45 7.60 L7.46 7.50 L7.47 7.40 L7.50 7.29 L7.55 7.18 L7.60 7.08 L7.67 6.98 L7.76 6.88 L7.85 6.79 L7.96 6.71 L8.07 6.63 L8.20 6.56 L8.34 6.51 L8.49 6.46 L8.64 6.43 L8.80 6.41 L8.97 6.40 L9.14 6.41 L9.31 6.44 L9.48 6.48 L9.65 6.54 L9.81 6.61 L9.97 6.70 L10.13 6.80 L10.27 6.92 L10.41 7.05 L10.53 7.20 L10.64 7.36 L10.73 7.53 L10.81 7.71 L10.87 7.91 L10.91 8.10 L10.93 8.31 L10.93 8.52 L10.91 8.73 L10.87 8.94 L10.80 9.15 L10.71 9.36 L10.60 9.56 L10.47 9.76 L10.32 9.94 L10.14 10.12 L9.95 10.28 L9.74 10.42 L9.51 10.55 L9.27 10.66 L9.01 10.75 L8.74 10.82 L8.46 10.87 L8.18 10.89 L7.89 10.89 L7.60 10.86 L7.30 10.81 L7.01 10.73 L6.73 10.63 L6.46 10.51 L6.19 10.35 L5.94 10.18 L5.70 9.98 L5.49 9.76 L5.29 9.52 L5.11 9.26 L4.97 8.99 L4.84 8.70 L4.75 8.39 L4.68 8.08 L4.65 7.76 L4.65 7.44 L4.68 7.11 L4.74 6.79 L4.84 6.46 L4.97 6.15 L5.13 5.84 L5.33 5.54 L5.55 5.26 L5.80 5.00 L6.09 4.76 L6.39 4.54 L6.72 4.34 L7.08 4.17 L7.45 4.04 L7.83 3.93 L8.23 3.85 L8.64 3.81 L9.06 3.80 L9.48 3.82 L9.89 3.89 L10.31 3.98 L10.71 4.12 L11.11 4.28 L11.49 4.49 L11.85 4.72 L12.19 4.99 L12.50 5.28 L12.79 5.61 L13.04 5.95 L13.26 6.33 L13.44 6.72 L13.59 7.13 L13.70 7.55 L13.76 7.98 L13.78 8.42 L13.76 8.86 L13.69 9.31 L13.58 9.75 L13.43 10.18 L13.23 10.60 L12.99 11.00 L12.71 11.39 L12.39 11.75 L12.03 12.09 L11.64 12.39 L11.21 12.67 L10.76 12.91 L10.28 13.12 L9.78 13.28 L9.27 13.40 L8.73 13.48 L8.19 13.52 L7.65 13.51 L7.10 13.45 L6.56 13.35 L6.03 13.20 L5.51 13.01 L5.01 12.77 L4.53 12.49 L4.07 12.17 L3.65 11.81 L3.27 11.41 L2.92 10.98 L2.61 10.52 L2.35 10.04 L2.13 9.53 L1.97 9.00 L1.85 8.46 L1.80 7.90 L1.79 7.34 L1.84 6.78 L1.95 6.22 L2.11 5.67 L2.33 5.14 L2.60 4.62 L2.92 4.12 L3.30 3.64 L3.72 3.20 L4.18 2.79 L4.69 2.43 L5.23 2.10" stroke="#b8b8b8" stroke-width="1.3" fill="none"/></svg>
<div class="a" style="left:7px;top:887px;width:16px;height:16px;background:#222222;"></div>
<svg class="a" style="left:8px;top:890px;" width="14" height="10" viewBox="0 0 14 10"><path d="M0.3 5 Q7 -2.5 13.7 5 Q7 12.5 0.3 5 Z" fill="#c0c0c0"/><circle cx="7" cy="5" r="2.9" fill="#1a1a1a"/><circle cx="7.8" cy="4.2" r="0.9" fill="#555"/></svg>
<div class="a" style="left:44.5px;top:887px;width:16px;height:16px;background:#222222;"></div>
<div class="a" style="left:63.5px;top:887px;width:16px;height:16px;background:#222222;"></div>
<svg class="a" style="left:95px;top:895px;" width="9" height="5" viewBox="0 0 9 5"><path d="M0.5 0.5 L4.5 4.5 L8.5 0.5" stroke="#a0a0a0" stroke-width="1.2" fill="none"/></svg>
<div class="a" style="left:108px;top:887px;width:19px;height:19px;background:#6b7fe0;"></div>
<div class="t" style="left:135px;top:889px;font-size:15px;color:#d0d0d0;font-family:'Liberation Serif',serif;font-weight:bold;">5</div>
<svg class="a" style="left:160px;top:889px;" width="16" height="16" viewBox="0 0 16 16"><path d="M8 0.5 L10.2 5.5 L15.5 6 L11.5 9.6 L12.7 15 L8 12.2 L3.3 15 L4.5 9.6 L0.5 6 L5.8 5.5 Z" fill="#b0b0b0"/></svg>
<div class="t" style="left:185px;top:891px;font-size:14.5px;color:#d4d4d4;font-family:'Liberation Serif',serif;font-weight:bold;letter-spacing:1.4px">形状图层 1</div>
<div class="a" style="left:373px;top:887px;width:17px;height:18px;background:#222222;"></div>
<svg class="a" style="left:374px;top:889px;" width="16" height="15" viewBox="0 0 16 15"><path d="M2.5 8 Q2.5 0.5 8 0.5 Q13.5 0.5 13.5 8 Z" fill="#a9a9a9"/><circle cx="5.8" cy="4.8" r="1.3" fill="#222222"/><circle cx="10.2" cy="4.8" r="1.3" fill="#222222"/><rect x="6.8" y="8" width="2.4" height="6" fill="#a9a9a9"/><path d="M0 11 H6.5 M9.5 11 H16" stroke="#a9a9a9" stroke-width="1.4"/></svg>
<div class="a" style="left:392px;top:887px;width:16px;height:18px;background:#222222;"></div>
<svg class="a" style="left:393px;top:889px;" width="14" height="14" viewBox="0 0 14 14"><circle cx="7" cy="7" r="3" stroke="#7a7a7a" stroke-width="1.3" fill="none"/><path d="M7 0 V3 M7 11 V14 M0 7 H3 M11 7 H14 M2 2 L4 4 M10 10 L12 12 M12 2 L10 4 M4 10 L2 12" stroke="#7a7a7a" stroke-width="1.2"/></svg>
<div class="a" style="left:410px;top:887px;width:17px;height:18px;background:#222222;"></div>
<svg class="a" style="left:411px;top:889px;" width="15" height="14" viewBox="0 0 15 14"><path d="M1 13 L14 1" stroke="#c0c0c0" stroke-width="1.6"/></svg>
<div class="a" style="left:467px;top:887px;width:16px;height:18px;background:#222222;"></div>
<div class="a" style="left:486px;top:887px;width:16px;height:18px;background:#222222;"></div>
<svg class="a" style="left:505px;top:888px;" width="16" height="16" viewBox="0 0 16 16"><path d="M8 0.8 L15 4.3 V11.7 L8 15.2 L1 11.7 V4.3 Z M1 4.3 L8 7.8 L15 4.3 M8 7.8 V15.2" stroke="#b8b8b8" stroke-width="1.4" fill="none"/></svg>
<div class="a" style="left:543px;top:886px;width:86px;height:21px;background:#1d1d1d;"></div>
<div class="t" style="left:552px;top:888px;font-size:16px;color:#d0d0d0;font-family:'Liberation Sans',sans-serif;">正常</div>
<svg class="a" style="left:614px;top:894px;" width="10" height="6" viewBox="0 0 10 6"><path d="M0.5 0.5 L5.0 5.5 L9.5 0.5" stroke="#c0c0c0" stroke-width="1.3" fill="none"/></svg>
<div class="a" style="left:636px;top:887px;width:16px;height:16px;background:#1d1d1d;"></div>
<div class="a" style="left:660px;top:886px;width:81px;height:21px;background:#1d1d1d;"></div>
<div class="t" style="left:669px;top:888px;font-size:14.5px;color:#d0d0d0;font-family:'Liberation Sans',sans-serif;">无</div>
<svg class="a" style="left:726px;top:894px;" width="10" height="6" viewBox="0 0 10 6"><path d="M0.5 0.5 L5.0 5.5 L9.5 0.5" stroke="#c0c0c0" stroke-width="1.3" fill="none"/></svg>
<svg class="a" style="left:752px;top:889px;" width="17" height="16" viewBox="0 0 17 16"><path d="M8.08 8.39 L8.01 8.38 L7.94 8.36 L7.87 8.33 L7.80 8.29 L7.74 8.24 L7.68 8.19 L7.62 8.12 L7.57 8.05 L7.53 7.98 L7.49 7.89 L7.47 7.80 L7.45 7.70 L7.45 7.60 L7.46 7.50 L7.47 7.40 L7.50 7.29 L7.55 7.18 L7.60 7.08 L7.67 6.98 L7.76 6.88 L7.85 6.79 L7.96 6.71 L8.07 6.63 L8.20 6.56 L8.34 6.51 L8.49 6.46 L8.64 6.43 L8.80 6.41 L8.97 6.40 L9.14 6.41 L9.31 6.44 L9.48 6.48 L9.65 6.54 L9.81 6.61 L9.97 6.70 L10.13 6.80 L10.27 6.92 L10.41 7.05 L10.53 7.20 L10.64 7.36 L10.73 7.53 L10.81 7.71 L10.87 7.91 L10.91 8.10 L10.93 8.31 L10.93 8.52 L10.91 8.73 L10.87 8.94 L10.80 9.15 L10.71 9.36 L10.60 9.56 L10.47 9.76 L10.32 9.94 L10.14 10.12 L9.95 10.28 L9.74 10.42 L9.51 10.55 L9.27 10.66 L9.01 10.75 L8.74 10.82 L8.46 10.87 L8.18 10.89 L7.89 10.89 L7.60 10.86 L7.30 10.81 L7.01 10.73 L6.73 10.63 L6.46 10.51 L6.19 10.35 L5.94 10.18 L5.70 9.98 L5.49 9.76 L5.29 9.52 L5.11 9.26 L4.97 8.99 L4.84 8.70 L4.75 8.39 L4.68 8.08 L4.65 7.76 L4.65 7.44 L4.68 7.11 L4.74 6.79 L4.84 6.46 L4.97 6.15 L5.13 5.84 L5.33 5.54 L5.55 5.26 L5.80 5.00 L6.09 4.76 L6.39 4.54 L6.72 4.34 L7.08 4.17 L7.45 4.04 L7.83 3.93 L8.23 3.85 L8.64 3.81 L9.06 3.80 L9.48 3.82 L9.89 3.89 L10.31 3.98 L10.71 4.12 L11.11 4.28 L11.49 4.49 L11.85 4.72 L12.19 4.99 L12.50 5.28 L12.79 5.61 L13.04 5.95 L13.26 6.33 L13.44 6.72 L13.59 7.13 L13.70 7.55 L13.76 7.98 L13.78 8.42 L13.76 8.86 L13.69 9.31 L13.58 9.75 L13.43 10.18 L13.23 10.60 L12.99 11.00 L12.71 11.39 L12.39 11.75 L12.03 12.09 L11.64 12.39 L11.21 12.67 L10.76 12.91 L10.28 13.12 L9.78 13.28 L9.27 13.40 L8.73 13.48 L8.19 13.52 L7.65 13.51 L7.10 13.45 L6.56 13.35 L6.03 13.20 L5.51 13.01 L5.01 12.77 L4.53 12.49 L4.07 12.17 L3.65 11.81 L3.27 11.41 L2.92 10.98 L2.61 10.52 L2.35 10.04 L2.13 9.53 L1.97 9.00 L1.85 8.46 L1.80 7.90 L1.79 7.34 L1.84 6.78 L1.95 6.22 L2.11 5.67 L2.33 5.14 L2.60 4.62 L2.92 4.12 L3.30 3.64 L3.72 3.20 L4.18 2.79 L4.69 2.43 L5.23 2.10" stroke="#b8b8b8" stroke-width="1.3" fill="none"/></svg>
<div class="a" style="left:776px;top:886px;width:111px;height:21px;background:#1d1d1d;"></div>
<div class="t" style="left:785px;top:888px;font-size:14.5px;color:#d0d0d0;font-family:'Liberation Sans',sans-serif;">无</div>
<svg class="a" style="left:872px;top:894px;" width="10" height="6" viewBox="0 0 10 6"><path d="M0.5 0.5 L5.0 5.5 L9.5 0.5" stroke="#c0c0c0" stroke-width="1.3" fill="none"/></svg>
<svg class="a" style="left:165px;top:914px;" width="16" height="18" viewBox="0 0 16 18"><circle cx="8" cy="10.5" r="6.5" stroke="#b8b8b8" stroke-width="1.6" fill="none"/><path d="M5.5 1 H10.5 M8 1 V4" stroke="#b8b8b8" stroke-width="1.6"/></svg>
<div class="t" style="left:187px;top:915px;font-size:14px;color:#d0d0d0;font-family:'Liberation Sans',sans-serif;">位置</div>
<div class="a" style="left:146.5px;top:922.5px;width:1.5px;height:1.5px;background:#444;"></div>
<div class="t" style="left:373px;top:916px;font-size:11.9px;color:#3a8ee6;font-family:'Liberation Mono',monospace;">0.0,360.0,700.0</div>
<svg class="a" style="left:770px;top:913px;" width="17" height="16" viewBox="0 0 17 16"><path d="M8.08 8.39 L8.01 8.38 L7.94 8.36 L7.87 8.33 L7.80 8.29 L7.74 8.24 L7.68 8.19 L7.62 8.12 L7.57 8.05 L7.53 7.98 L7.49 7.89 L7.47 7.80 L7.45 7.70 L7.45 7.60 L7.46 7.50 L7.47 7.40 L7.50 7.29 L7.55 7.18 L7.60 7.08 L7.67 6.98 L7.76 6.88 L7.85 6.79 L7.96 6.71 L8.07 6.63 L8.20 6.56 L8.34 6.51 L8.49 6.46 L8.64 6.43 L8.80 6.41 L8.97 6.40 L9.14 6.41 L9.31 6.44 L9.48 6.48 L9.65 6.54 L9.81 6.61 L9.97 6.70 L10.13 6.80 L10.27 6.92 L10.41 7.05 L10.53 7.20 L10.64 7.36 L10.73 7.53 L10.81 7.71 L10.87 7.91 L10.91 8.10 L10.93 8.31 L10.93 8.52 L10.91 8.73 L10.87 8.94 L10.80 9.15 L10.71 9.36 L10.60 9.56 L10.47 9.76 L10.32 9.94 L10.14 10.12 L9.95 10.28 L9.74 10.42 L9.51 10.55 L9.27 10.66 L9.01 10.75 L8.74 10.82 L8.46 10.87 L8.18 10.89 L7.89 10.89 L7.60 10.86 L7.30 10.81 L7.01 10.73 L6.73 10.63 L6.46 10.51 L6.19 10.35 L5.94 10.18 L5.70 9.98 L5.49 9.76 L5.29 9.52 L5.11 9.26 L4.97 8.99 L4.84 8.70 L4.75 8.39 L4.68 8.08 L4.65 7.76 L4.65 7.44 L4.68 7.11 L4.74 6.79 L4.84 6.46 L4.97 6.15 L5.13 5.84 L5.33 5.54 L5.55 5.26 L5.80 5.00 L6.09 4.76 L6.39 4.54 L6.72 4.34 L7.08 4.17 L7.45 4.04 L7.83 3.93 L8.23 3.85 L8.64 3.81 L9.06 3.80 L9.48 3.82 L9.89 3.89 L10.31 3.98 L10.71 4.12 L11.11 4.28 L11.49 4.49 L11.85 4.72 L12.19 4.99 L12.50 5.28 L12.79 5.61 L13.04 5.95 L13.26 6.33 L13.44 6.72 L13.59 7.13 L13.70 7.55 L13.76 7.98 L13.78 8.42 L13.76 8.86 L13.69 9.31 L13.58 9.75 L13.43 10.18 L13.23 10.60 L12.99 11.00 L12.71 11.39 L12.39 11.75 L12.03 12.09 L11.64 12.39 L11.21 12.67 L10.76 12.91 L10.28 13.12 L9.78 13.28 L9.27 13.40 L8.73 13.48 L8.19 13.52 L7.65 13.51 L7.10 13.45 L6.56 13.35 L6.03 13.20 L5.51 13.01 L5.01 12.77 L4.53 12.49 L4.07 12.17 L3.65 11.81 L3.27 11.41 L2.92 10.98 L2.61 10.52 L2.35 10.04 L2.13 9.53 L1.97 9.00 L1.85 8.46 L1.80 7.90 L1.79 7.34 L1.84 6.78 L1.95 6.22 L2.11 5.67 L2.33 5.14 L2.60 4.62 L2.92 4.12 L3.30 3.64 L3.72 3.20 L4.18 2.79 L4.69 2.43 L5.23 2.10" stroke="#b8b8b8" stroke-width="1.3" fill="none"/></svg>
<svg class="a" style="left:1577px;top:712px;" width="19" height="17" viewBox="0 0 19 17"><path d="M1 10 L8 2 V10 Z" stroke="#b8b8b8" stroke-width="1.5" fill="none"/><rect x="9" y="3" width="9" height="8" fill="#b8b8b8"/><circle cx="7" cy="12" r="3.5" stroke="#b8b8b8" stroke-width="1.8" fill="#262626"/></svg>
<div class="a" style="left:922px;top:712px;width:654px;height:20px;background:#773a3a;"></div>
<div class="a" style="left:922px;top:762px;width:654px;height:21px;background:linear-gradient(#e0b0c0,#c98aa0);"></div>
<div class="a" style="left:922px;top:762px;width:2px;height:21px;background:#f4e0e8;"></div>
<div class="a" style="left:922px;top:787px;width:654px;height:20px;background:#525a8c;"></div>
<div class="a" style="left:922px;top:837px;width:654px;height:20px;background:#525a8c;"></div>
<div class="a" style="left:922px;top:887px;width:654px;height:20px;background:#525a8c;"></div>
<svg class="a" style="left:917.8px;top:741px;" width="10.4" height="11" viewBox="0 0 10.4 11"><path d="M5.2 0 L10.4 5.5 L5.2 11 L0 5.5 Z" fill="#b4b4b4"/><path d="M5.2 0 L0 5.5 L5.2 11 Z" fill="#8a8a8a"/></svg>
<svg class="a" style="left:1007.5px;top:741px;" width="10.4" height="11" viewBox="0 0 10.4 11"><path d="M5.2 0 L10.4 5.5 L5.2 11 L0 5.5 Z" fill="#b4b4b4"/><path d="M5.2 0 L0 5.5 L5.2 11 Z" fill="#8a8a8a"/></svg>
<div class="a" style="left:1012.2px;top:683px;width:1.6px;height:324px;background:#2d8ceb;"></div>
<svg class="a" style="left:1006px;top:666px;" width="15" height="18" viewBox="0 0 15 18"><path d="M0 0 H14.5 V8 L7.25 17.5 L0 8 Z" fill="#2d8ceb"/><path d="M5.2 8.5 H9.2 M7.1 8.5 V17" stroke="#1a1a1a" stroke-width="1.1"/></svg>
<svg class="a" style="left:1008px;top:813px;" width="10" height="15" viewBox="0 0 10 15"><path d="M1.5 0.8 H8.5 M5 0.8 V14.2 M1.5 14.2 H8.5" stroke="#c8c8c8" stroke-width="1.6"/></svg>
<svg class="a" style="left:1008px;top:863px;" width="10" height="15" viewBox="0 0 10 15"><path d="M1.5 0.8 H8.5 M5 0.8 V14.2 M1.5 14.2 H8.5" stroke="#c8c8c8" stroke-width="1.6"/></svg>
<svg class="a" style="left:1008px;top:913px;" width="10" height="15" viewBox="0 0 10 15"><path d="M1.5 0.8 H8.5 M5 0.8 V14.2 M1.5 14.2 H8.5" stroke="#c8c8c8" stroke-width="1.6"/></svg>
<div class="a" style="left:2px;top:1009px;width:1595px;height:19px;background:#232323;"></div>
<svg class="a" style="left:10px;top:1011px;" width="16" height="16" viewBox="0 0 16 16"><rect x="0.8" y="0.8" width="9" height="9" rx="1" stroke="#2d8ceb" stroke-width="1.4" fill="none"/><rect x="3.5" y="3.5" width="9" height="9" rx="1" stroke="#2d8ceb" stroke-width="1.4" fill="#232323"/><rect x="6" y="6" width="9" height="9" rx="1" stroke="#2d8ceb" stroke-width="1.4" fill="#232323"/><rect x="9.5" y="9.5" width="2" height="2" fill="#2d8ceb"/></svg>
<svg class="a" style="left:32px;top:1011px;" width="15" height="16" viewBox="0 0 15 16"><circle cx="5.5" cy="5.5" r="4.8" stroke="#2d8ceb" stroke-width="1.4" fill="none"/><rect x="6" y="6" width="8.2" height="9" stroke="#2d8ceb" stroke-width="1.4" fill="#232323"/><path d="M6 6 H9.5 A4.8 4.8 0 0 1 6 9.8 Z" fill="#2d8ceb"/></svg>
<svg class="a" style="left:55px;top:1011px;" width="16" height="16" viewBox="0 0 16 16"><path d="M4 0 H12 V3 L15.5 8 L12 13 V16 H4 V13 L0.5 8 L4 3 Z" fill="#d0d0d0"/><rect x="5.5" y="0" width="5" height="16" fill="#707070"/></svg>
<div class="a" style="left:913px;top:1009px;width:134px;height:19px;background:#1f1f1f;"></div>
<svg class="a" style="left:920px;top:1014px;" width="13" height="7" viewBox="0 0 13 7"><path d="M0 6.5 L4 3 L6 4.5 L8 1 L13 6.5 Z" fill="#c0c0c0"/></svg>
<div class="a" style="left:952px;top:1017px;width:54px;height:1.5px;background:#555;"></div>
<svg class="a" style="left:985px;top:1012px;" width="14" height="14" viewBox="0 0 14 14"><circle cx="7" cy="7" r="5.5" stroke="#c0c0c0" stroke-width="2" fill="#1f1f1f"/></svg>
<svg class="a" style="left:1021px;top:1013px;" width="22" height="10" viewBox="0 0 22 10"><path d="M0 9.5 L4 5 L6 5 L2.5 9.5 Z M5 9.5 L12 1 L21.5 9.5 Z" fill="#c0c0c0"/></svg>
<div class="a" style="left:1048px;top:1008px;width:148px;height:19px;background:#333;border-radius:9px"></div>
</body></html>
